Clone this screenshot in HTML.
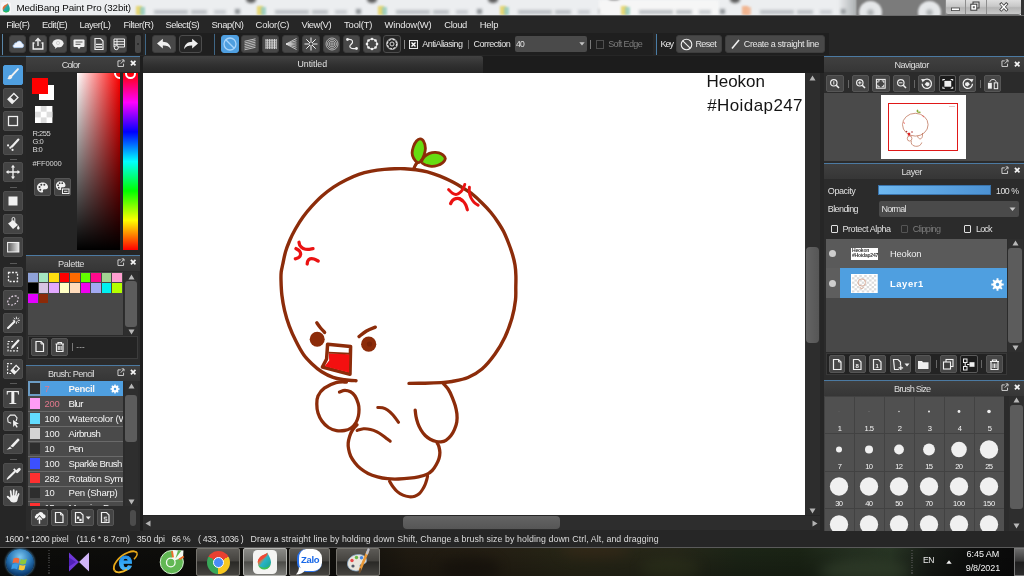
<!DOCTYPE html>
<html>
<head>
<meta charset="utf-8">
<title>MediBang Paint Pro (32bit)</title>
<style>
*{box-sizing:border-box;margin:0;padding:0}
html,body{width:1024px;height:576px;overflow:hidden;background:#262626;font-family:"Liberation Sans",sans-serif;font-size:10px;color:#dcdcdc}
.a{position:absolute}
.x{position:absolute;white-space:nowrap;display:block}
svg{display:block;overflow:visible}
#app{position:absolute;left:0;top:0;width:1024px;height:576px;overflow:hidden;will-change:transform}
</style>
</head>
<body>
<div id="app">
<div class="a" style="left:141px;top:55.5px;width:683px;height:17.5px;background:#1c1c1c"></div><div class="a" style="left:143px;top:56px;width:340px;height:17px;background:linear-gradient(#424242,#303030 55%,#262626);border-radius:2px 2px 0 0"></div><span class="x" style="left:297.5px;top:58.3px;font-size:8.8px;line-height:12px;color:#e4e4e4;letter-spacing:-0.04px;">Untitled</span><div class="a" style="left:143px;top:73px;width:662.2px;height:442px;background:#fff"></div><svg class="a" style="left:143px;top:73px" width="662.5" height="442" viewBox="143 73 662.5 442"><path d="M356 380.7C354.1 380.6 348.4 380.4 344.6 379.8C340.8 379.2 336.9 378.8 333.1 377.4C329.3 376 325.2 373.9 321.7 371.7C318.2 369.5 315.1 366.9 312.1 364C309.1 361.1 306.2 358.3 303.5 354.5C300.8 350.7 298.3 345.9 295.9 341.1C293.5 336.3 291.1 330.9 289.2 325.8C287.3 320.7 285.8 315.7 284.6 310.6C283.4 305.5 282.5 300.4 281.9 295.3C281.3 290.2 281.1 283.9 281 280C280.9 276.1 280.9 274.7 281.2 272C281.5 269.3 282.1 267.4 282.8 264C283.5 260.6 284.4 255.8 285.5 251.9C286.6 248 288.1 244.3 289.7 240.5C291.3 236.7 293.2 232.9 295.4 229C297.6 225.1 300.2 220.8 303 217C305.8 213.2 308.7 209.7 311.9 206.2C315.1 202.7 318.4 199.2 322 196C325.6 192.8 329.5 189.8 333.5 187.1C337.5 184.4 341.8 182.1 346 180C350.2 177.9 354.6 175.9 358.9 174.4C363.1 172.9 367.3 172 371.5 171.2C375.7 170.4 380.5 169.8 384.3 169.4C388.1 169 391.1 168.8 394.5 168.7C397.9 168.6 401 168.5 404.6 168.7C408.2 168.9 412.2 169.2 416 169.7C419.8 170.2 423.4 170.8 427.4 171.9C431.4 173 435.8 174.5 440 176.2C444.2 177.9 449 180.1 452.8 182.1C456.6 184.1 459.6 185.9 463 188C466.4 190.1 469.9 192.2 473.1 194.8C476.4 197.4 479.5 200.6 482.5 203.5C485.5 206.4 488.4 209.5 490.9 212.5C493.4 215.5 495.4 218.3 497.5 221.5C499.6 224.7 501.8 228 503.6 231.6C505.4 235.2 507 239.2 508.5 243C510 246.8 511.4 250.7 512.5 254.4C513.6 258.1 514.4 261.4 515 265C515.6 268.6 515.8 272.3 515.9 276C516 279.7 515.9 283 515.8 287C515.7 291 516.1 294.8 515.5 300C514.9 305.2 513.8 311.8 512 318C510.2 324.2 507.8 331 505 337C502.2 343 498.8 348.7 495 354C491.2 359.3 486.5 365.1 482 369C477.5 372.9 473 375.4 468 377.5C463 379.6 456.5 380.6 452 381.5C447.5 382.4 445.5 382.3 441 382.6C436.5 382.9 430.3 383.1 425 383.2C419.7 383.3 411.7 383.4 409 383.4" fill="none" stroke="#8c2c0a" stroke-width="3.4" stroke-linecap="round" stroke-linejoin="round"/><path d="M414 168.3C414.2 167.8 414.9 166.1 415.5 165C416.1 163.9 417.1 162.5 417.4 162" fill="none" stroke="#8c2c0a" stroke-width="3.2" stroke-linecap="round" stroke-linejoin="round"/><path d="M417.7 162.5C416.5 162.1 414.5 159.8 413.6 158.2C412.7 156.6 412.1 155 412.1 153.1C412.1 151.2 412.7 148.6 413.4 146.6C414.1 144.6 415.4 142.3 416.5 141C417.6 139.7 419 138.8 420.2 138.9C421.4 139 423 140.1 423.8 141.7C424.7 143.2 425.4 145.9 425.4 148.2C425.5 150.4 424.8 152.8 424.1 155C423.4 157.1 422.1 159.6 421 160.8C420 162.1 418.9 162.9 417.7 162.5z" fill="#66dc12" stroke="#8c2c0a" stroke-width="2.8" stroke-linecap="round" stroke-linejoin="round"/><path d="M421.6 162.3C421.4 160.9 423 158.4 424.3 156.9C425.6 155.4 427.6 154.2 429.4 153.4C431.3 152.7 433.5 152.3 435.5 152.4C437.5 152.5 439.9 153 441.5 154C443.2 155 445.1 157 445.2 158.5C445.4 160 443.8 161.8 442.5 162.9C441.1 164.1 439.2 165 437.3 165.5C435.5 166.1 433.2 166.4 431.3 166.3C429.4 166.2 427.3 165.6 425.7 165C424.1 164.3 421.9 163.6 421.6 162.3z" fill="#66dc12" stroke="#8c2c0a" stroke-width="2.8" stroke-linecap="round" stroke-linejoin="round"/><path d="M448.6 189.6C449.2 190.2 451.2 192.4 452.5 193.2C453.8 194 455.2 194.7 456.6 194.4C458 194.1 459.8 192.7 461 191.6C462.2 190.5 463 188.8 463.6 187.6C464.2 186.4 464.6 184.9 464.8 184.4" fill="none" stroke="#ea1212" stroke-width="2.9" stroke-linecap="round" stroke-linejoin="round"/><path d="M469.4 187.2C469.4 188 469.1 190.3 469.3 192C469.5 193.7 470 195.8 470.8 197.5C471.6 199.2 472.8 200.9 474 202.2C475.2 203.5 477.5 204.7 478.2 205.2" fill="none" stroke="#ea1212" stroke-width="2.9" stroke-linecap="round" stroke-linejoin="round"/><path d="M450.6 203.6C450.9 203.1 451.6 201.2 452.5 200.4C453.4 199.6 454.6 198.9 455.8 198.6C457 198.3 458.4 198.3 459.5 198.6C460.6 198.9 461.8 200.3 462.2 200.6" fill="none" stroke="#ea1212" stroke-width="3.3" stroke-linecap="round" stroke-linejoin="round"/><path d="M459 198.6C459.7 199 461.9 199.9 463 201C464.1 202.1 465.1 203.5 465.8 205C466.5 206.5 467.1 209 467.4 209.8" fill="none" stroke="#ea1212" stroke-width="3.1" stroke-linecap="round" stroke-linejoin="round"/><path d="M299 242.2C299.2 242.8 299.3 244.6 300 245.6C300.7 246.6 301.9 247.8 303.2 248.4C304.5 249 306.2 249.4 307.8 249.4C309.4 249.4 312.1 248.7 313 248.6" fill="none" stroke="#ea1212" stroke-width="3.3" stroke-linecap="round" stroke-linejoin="round"/><path d="M296 248.6C296.6 249 298.7 250 299.5 251C300.3 252 300.7 253.4 300.6 254.4C300.5 255.4 299.9 256.5 299 257.2C298.1 257.9 296 258.5 295.4 258.8" fill="none" stroke="#ea1212" stroke-width="3.3" stroke-linecap="round" stroke-linejoin="round"/><path d="M307.2 264C307.3 263.5 307.3 261.9 307.8 261C308.3 260.1 309 259.2 310 258.9C311 258.6 312.6 258.6 314 259C315.4 259.4 317.5 260.7 318.2 261" fill="none" stroke="#ea1212" stroke-width="3.3" stroke-linecap="round" stroke-linejoin="round"/><circle cx="317.2" cy="339.2" r="7.5" fill="#8c2c0a"/><circle cx="368.7" cy="344.2" r="7.6" fill="#8c2c0a"/><circle cx="369.5" cy="344" r="2.6" fill="#7a2408"/><path d="M316.8 322.8C317.4 323.6 318.9 325.9 320.2 327.5C321.5 329.1 323.9 331.6 324.6 332.4" fill="none" stroke="#8c2c0a" stroke-width="3.4" stroke-linecap="round" stroke-linejoin="round"/><path d="M359 336.6C360.2 335.7 363.8 332.6 366.5 331C369.2 329.4 373.8 327.8 375.3 327.2" fill="none" stroke="#8c2c0a" stroke-width="3.4" stroke-linecap="round" stroke-linejoin="round"/><path d="M327.6 344.2L350.6 346.4L350 374.2L322.4 367L326.6 359z" fill="#fff" stroke="#8c2c0a" stroke-width="3.5" stroke-linejoin="round"/><path d="M328.8 353.2L349.4 354.2L349 372.6L324.6 366.2L329.2 360.4z" fill="#f41010"/><path d="M328.6 352.6L349.6 353.6" stroke="#8c2c0a" stroke-width="1.6"/><path d="M346.4 382C344.7 382.1 339.7 381.6 336 382.6C332.3 383.6 327.3 386 324.3 388.2C321.3 390.4 319.2 393.4 318 396C316.8 398.6 316.8 401.2 316.8 404C316.8 406.8 317.1 410.2 318 413C318.9 415.8 320.1 418.6 321.9 421C323.6 423.4 326.1 425.9 328.5 427.5C330.9 429.1 333.8 430.1 336.5 430.6C339.2 431.1 342.1 430.9 344.5 430.5C346.9 430.1 349.1 429.3 351 428C352.9 426.7 354.8 424.5 356 422.5C357.2 420.5 357.9 418.2 358.4 416C358.9 413.8 359 411.6 359 409.5C359 407.4 358.9 405.8 358.2 403.5C357.5 401.2 356.3 397.9 355 396C353.7 394.1 352.2 392.7 350.5 391.8C348.8 390.9 346.8 390.4 345 390.4C343.2 390.4 340.4 391.7 339.5 392" fill="none" stroke="#8c2c0a" stroke-width="3.3" stroke-linecap="round" stroke-linejoin="round"/><path d="M357 424.8C356.2 425.7 353.7 428.1 352.5 430C351.3 431.9 350.3 434.3 349.6 436.5C348.9 438.7 348.4 440.9 348.2 443C348 445.1 348.2 446.8 348.6 449C349 451.2 349.6 453.8 350.6 456C351.6 458.2 353.1 460.3 354.7 462.4C356.3 464.5 358.3 466.7 360.5 468.5C362.7 470.3 365.3 472 368.1 473.4C370.9 474.8 374.3 475.9 377.5 476.8C380.7 477.7 384 478.3 387.5 478.7C391 479.1 394.9 479.1 398.5 479C402.1 478.9 406.1 478.6 409.4 478.2C412.7 477.8 415.6 477.4 418.5 476.8C421.4 476.2 424.2 475.7 426.5 474.6C428.8 473.6 430.6 472.1 432.2 470.5C433.8 468.9 435.1 466.8 436.2 464.8C437.3 462.8 438.4 460.6 439 458.5C439.6 456.4 439.9 454.4 439.9 452.5C439.9 450.6 439.4 448.6 439 447C438.6 445.4 437.5 443.7 437.2 443" fill="none" stroke="#8c2c0a" stroke-width="3.3" stroke-linecap="round" stroke-linejoin="round"/><path d="M357.1 430.4C358.2 430.1 361.3 429 363.5 428.8C365.7 428.6 368.2 428.9 370.5 429.4C372.8 429.9 375 430.8 377 431.8C379 432.8 381 434.2 382.7 435.4C384.4 436.6 385.8 437.8 387 438.8C388.2 439.8 389.7 440.8 390.2 441.2" fill="none" stroke="#8c2c0a" stroke-width="3.1" stroke-linecap="round" stroke-linejoin="round"/><path d="M377.8 407.5C378.6 407.6 380.9 407.4 382.5 407.8C384.1 408.2 385.8 408.9 387.5 410.1C389.2 411.3 391.2 413 393 415C394.8 417 397.6 421.1 398.5 422.3" fill="none" stroke="#8c2c0a" stroke-width="3.1" stroke-linecap="round" stroke-linejoin="round"/><path d="M443.5 383.6C444.3 384.6 447 387.3 448.4 389.5C449.8 391.7 450.9 394.1 452 396.8C453.1 399.5 454.4 402.7 455.2 405.5C456 408.3 456.6 411.1 456.9 413.8C457.2 416.6 457.2 419.4 456.8 422C456.4 424.6 455.4 427.3 454.4 429.6C453.4 431.9 452.2 434 450.8 435.8C449.4 437.6 447.5 439.3 445.9 440.3C444.3 441.3 442.6 441.7 441 441.9C439.4 442.1 438 441.9 436.2 441.5C434.4 441.1 432 440.2 430.2 439.2C428.4 438.2 426.7 437 425.2 435.5C423.7 434 422.2 432 421 430C419.8 428 418.7 425.8 417.9 423.5C417.1 421.2 416.4 418.7 416 416.5C415.6 414.3 415.3 411.2 415.2 410.1" fill="none" stroke="#8c2c0a" stroke-width="3.3" stroke-linecap="round" stroke-linejoin="round"/><path d="M389.5 481.2C390.1 482.1 391.5 484.8 392.8 486.5C394.1 488.2 395.6 490.2 397.3 491.6C399 493.1 401 494.3 403 495.2C405 496.1 407.4 496.6 409.4 496.8C411.4 497 413.2 496.7 414.8 496.2C416.4 495.7 417.9 494.9 419.2 493.8C420.5 492.7 421.5 491.1 422.5 489.5C423.5 487.9 424.5 486 425.2 484.3C425.9 482.6 426.4 480.9 426.8 479.5C427.2 478.1 427.5 476.6 427.6 476" fill="none" stroke="#8c2c0a" stroke-width="3.1" stroke-linecap="round" stroke-linejoin="round"/></svg><span class="x" style="left:706.6px;top:72.5px;font-size:17px;line-height:18px;color:#141414;letter-spacing:-0.07px">Heokon</span><span class="x" style="left:707.2px;top:96.5px;font-size:17px;line-height:18px;color:#141414;letter-spacing:0.41px">#Hoidap247</span><div class="a" style="left:805.2px;top:73px;width:14.8px;height:442px;background:#2d2d2d"></div><div class="a" style="left:820px;top:73px;width:4px;height:458px;background:#262626"></div><svg class="a" style="left:808.8px;top:74.8px;" width="7" height="6" viewBox="0 0 7 6"><path d="M3.5 .5L6.5 5.5H.5z" fill="#b4b4b4"/></svg><div class="a" style="left:806.3px;top:246.6px;width:12.5px;height:96px;background:linear-gradient(90deg,#646464,#565656);border-radius:4px"></div><svg class="a" style="left:808.8px;top:508px;" width="7" height="6" viewBox="0 0 7 6"><path d="M3.5 5.5L6.5 .5H.5z" fill="#b4b4b4"/></svg><div class="a" style="left:141px;top:515px;width:683px;height:16px;background:#262626"></div><div class="a" style="left:143px;top:515.5px;width:677px;height:14.5px;background:#2d2d2d"></div><svg class="a" style="left:144.5px;top:519.5px;" width="6" height="7" viewBox="0 0 6 7"><path d="M.5 3.5L5.5 .5v6z" fill="#b4b4b4"/></svg><div class="a" style="left:402.5px;top:516.3px;width:157px;height:12.8px;background:linear-gradient(#646464,#565656);border-radius:4px"></div><svg class="a" style="left:811.5px;top:519.5px;" width="6" height="7" viewBox="0 0 6 7"><path d="M5.5 3.5L.5 .5v6z" fill="#b4b4b4"/></svg><div class="a" style="left:140px;top:56px;width:3px;height:475px;background:#1e1e1e"></div><div class="a" style="left:0px;top:0px;width:1024px;height:16px;background:#eceef0;overflow:hidden"><div class="a" style="left:136px;top:5.5px;width:6px;height:9px;background:#e6d466;filter:blur(1.3px);opacity:.9"></div><div class="a" style="left:140px;top:6.5px;width:5px;height:8px;background:#8cc8b8;filter:blur(1.3px);opacity:.75"></div><div class="a" style="left:154px;top:9.5px;width:34px;height:4px;background:#bcc0c4;filter:blur(1.4px)"></div><div class="a" style="left:191px;top:9.5px;width:16px;height:4px;background:#bcc0c4;filter:blur(1.4px)"></div><div class="a" style="left:214px;top:10px;width:12px;height:3.5px;background:#c8ccd0;filter:blur(1.4px)"></div><div class="a" style="left:235px;top:9px;width:5px;height:5px;background:#8e9296;filter:blur(1.4px)"></div><div class="a" style="left:245.5px;top:-4px;width:10px;height:6.5px;background:#5a5a5a;border-radius:50%;filter:blur(1.5px)"></div><div class="a" style="left:257.2px;top:5.5px;width:6px;height:9px;background:#e6d466;filter:blur(1.3px);opacity:.9"></div><div class="a" style="left:261.2px;top:6.5px;width:5px;height:8px;background:#8cc8b8;filter:blur(1.3px);opacity:.75"></div><div class="a" style="left:275.2px;top:9.5px;width:34px;height:4px;background:#bcc0c4;filter:blur(1.4px)"></div><div class="a" style="left:312.2px;top:9.5px;width:16px;height:4px;background:#bcc0c4;filter:blur(1.4px)"></div><div class="a" style="left:335.2px;top:10px;width:12px;height:3.5px;background:#c8ccd0;filter:blur(1.4px)"></div><div class="a" style="left:356.2px;top:9px;width:5px;height:5px;background:#8e9296;filter:blur(1.4px)"></div><div class="a" style="left:366.7px;top:-4px;width:10px;height:6.5px;background:#5a5a5a;border-radius:50%;filter:blur(1.5px)"></div><div class="a" style="left:378.4px;top:5.5px;width:6px;height:9px;background:#e6d466;filter:blur(1.3px);opacity:.9"></div><div class="a" style="left:382.4px;top:6.5px;width:5px;height:8px;background:#8cc8b8;filter:blur(1.3px);opacity:.75"></div><div class="a" style="left:396.4px;top:9.5px;width:34px;height:4px;background:#bcc0c4;filter:blur(1.4px)"></div><div class="a" style="left:433.4px;top:9.5px;width:16px;height:4px;background:#bcc0c4;filter:blur(1.4px)"></div><div class="a" style="left:456.4px;top:10px;width:12px;height:3.5px;background:#c8ccd0;filter:blur(1.4px)"></div><div class="a" style="left:477.4px;top:9px;width:5px;height:5px;background:#8e9296;filter:blur(1.4px)"></div><div class="a" style="left:487.9px;top:-4px;width:10px;height:6.5px;background:#5a5a5a;border-radius:50%;filter:blur(1.5px)"></div><div class="a" style="left:499.6px;top:5.5px;width:6px;height:9px;background:#e6d466;filter:blur(1.3px);opacity:.9"></div><div class="a" style="left:503.6px;top:6.5px;width:5px;height:8px;background:#8cc8b8;filter:blur(1.3px);opacity:.75"></div><div class="a" style="left:517.6px;top:9.5px;width:34px;height:4px;background:#bcc0c4;filter:blur(1.4px)"></div><div class="a" style="left:554.6px;top:9.5px;width:16px;height:4px;background:#bcc0c4;filter:blur(1.4px)"></div><div class="a" style="left:577.6px;top:10px;width:12px;height:3.5px;background:#c8ccd0;filter:blur(1.4px)"></div><div class="a" style="left:598.6px;top:9px;width:5px;height:5px;background:#8e9296;filter:blur(1.4px)"></div><div class="a" style="left:609.1px;top:-4px;width:10px;height:6.5px;background:#5a5a5a;border-radius:50%;filter:blur(1.5px)"></div><div class="a" style="left:598.8px;top:0;width:120px;height:16px;background:#f6f6f6;filter:blur(1.5px)"></div><div class="a" style="left:620.8px;top:5.5px;width:6px;height:9px;background:#e6d466;filter:blur(1.3px);opacity:.9"></div><div class="a" style="left:624.8px;top:6.5px;width:5px;height:8px;background:#8cc8b8;filter:blur(1.3px);opacity:.75"></div><div class="a" style="left:638.8px;top:9.5px;width:34px;height:4px;background:#bcc0c4;filter:blur(1.4px)"></div><div class="a" style="left:675.8px;top:9.5px;width:16px;height:4px;background:#bcc0c4;filter:blur(1.4px)"></div><div class="a" style="left:698.8px;top:10px;width:12px;height:3.5px;background:#c8ccd0;filter:blur(1.4px)"></div><div class="a" style="left:719.8px;top:9px;width:5px;height:5px;background:#8e9296;filter:blur(1.4px)"></div><div class="a" style="left:730.3px;top:-4px;width:10px;height:6.5px;background:#5a5a5a;border-radius:50%;filter:blur(1.5px)"></div><div class="a" style="left:742px;top:5.5px;width:6px;height:9px;background:#f2b088;filter:blur(1.3px);opacity:.9"></div><div class="a" style="left:746px;top:6.5px;width:5px;height:8px;background:#f2b088;filter:blur(1.3px);opacity:.75"></div><div class="a" style="left:760px;top:9.5px;width:34px;height:4px;background:#bcc0c4;filter:blur(1.4px)"></div><div class="a" style="left:797px;top:9.5px;width:16px;height:4px;background:#bcc0c4;filter:blur(1.4px)"></div><div class="a" style="left:820px;top:10px;width:12px;height:3.5px;background:#c8ccd0;filter:blur(1.4px)"></div><div class="a" style="left:841px;top:9px;width:5px;height:5px;background:#8e9296;filter:blur(1.4px)"></div><div class="a" style="left:855px;top:-2px;width:92px;height:20px;background:#7b7b7b;filter:blur(1.2px)"></div><div class="a" style="left:859px;top:.5px;width:23px;height:23px;border-radius:50%;background:radial-gradient(circle,#a8acae 0,#b4b8ba 10%,#e4e6e8 30%,#e6e8ea 78%,rgba(230,232,234,0) 100%);filter:blur(.8px)"></div><div class="a" style="left:918px;top:.5px;width:23px;height:23px;border-radius:50%;background:radial-gradient(circle,#a8acae 0,#b4b8ba 10%,#e4e6e8 30%,#e6e8ea 78%,rgba(230,232,234,0) 100%);filter:blur(.8px)"></div><div class="a" style="left:838px;top:-2px;width:18px;height:20px;background:linear-gradient(90deg,rgba(200,204,206,0),#aeb2b4);filter:blur(1px)"></div><div class="a" style="left:945px;top:0;width:76px;height:15px;background:linear-gradient(#dedede,#c8c8c8 45%,#b4b4b4 55%,#c8c8c8);border-left:1px solid #8a8a8a;border-bottom:1px solid #777;border-radius:0 0 3px 3px"></div><div class="a" style="left:965px;top:0;width:1px;height:14px;background:#8e8e8e"></div><div class="a" style="left:986px;top:0;width:1px;height:14px;background:#8e8e8e"></div><div class="a" style="left:1021px;top:0;width:3px;height:16px;background:#333"></div><svg class="a" style="left:945px;top:0px;" width="76" height="16" viewBox="0 0 76 16"><rect x="6.5" y="8" width="8" height="2.6" fill="#fff" stroke="#444" stroke-width=".8"/><rect x="28" y="2" width="6" height="6" fill="#ddd" stroke="#3a3a3a" stroke-width="1"/><rect x="25.8" y="4.2" width="6" height="6" fill="#fff" stroke="#3a3a3a" stroke-width="1"/><rect x="27.8" y="6.2" width="2" height="2" fill="#666"/><path d="M56.3 4.2L61.3 9.6M61.3 4.2L56.3 9.6" stroke="#3a3a3a" stroke-width="3" stroke-linecap="square"/><path d="M56.3 4.2L61.3 9.6M61.3 4.2L56.3 9.6" stroke="#fff" stroke-width="1.5" stroke-linecap="square"/></svg><div class="a" style="left:.8px;top:2.3px;width:10.5px;height:11.4px;border-radius:2.5px;background:#f8f6f8"></div><svg class="a" style="left:0.8px;top:2.3px;" width="10.5" height="11.4" viewBox="0 0 19 21"><defs><linearGradient id="apg" x1="0" y1="0" x2="1" y2="1"><stop offset="0" stop-color="#e83a30"/><stop offset=".32" stop-color="#e87030"/><stop offset=".5" stop-color="#20a8b0"/><stop offset=".8" stop-color="#18a888"/><stop offset="1" stop-color="#30c040"/></linearGradient></defs><path d="M12.5 2.5c.5 2.5 3.5 5.5 3.5 10a6.6 6.6 0 0 1-13.2 0c0-4 3-6.5 5.5-7.5 1.8-.7 3.4-1.5 4.2-2.5z" fill="url(#apg)"/><path d="M3 14.5c2 3.5 9 5 12.5 0-1 4-4 5-6.5 5s-5.2-1.5-6-5z" fill="#30c048"/></svg><span class="x" style="left:16.5px;top:1.3px;font-size:9.8px;line-height:14px;color:#0a0a0a;letter-spacing:-0.12px;">MediBang Paint Pro (32bit)</span></div><div class="a" style="left:0px;top:15px;width:1024px;height:1px;background:#6a6a6a"></div><div class="a" style="left:0px;top:16px;width:1024px;height:17px;background:#262626"></div><span class="x" style="left:6.3px;top:19px;font-size:9.4px;line-height:12px;color:#e8e8e8;letter-spacing:-0.58px;">File(F)</span><span class="x" style="left:42px;top:19px;font-size:9.4px;line-height:12px;color:#e8e8e8;letter-spacing:-0.49px;">Edit(E)</span><span class="x" style="left:79.5px;top:19px;font-size:9.4px;line-height:12px;color:#e8e8e8;letter-spacing:-0.52px;">Layer(L)</span><span class="x" style="left:123.5px;top:19px;font-size:9.4px;line-height:12px;color:#e8e8e8;letter-spacing:-0.45px;">Filter(R)</span><span class="x" style="left:165.5px;top:19px;font-size:9.4px;line-height:12px;color:#e8e8e8;letter-spacing:-0.54px;">Select(S)</span><span class="x" style="left:211.5px;top:19px;font-size:9.4px;line-height:12px;color:#e8e8e8;letter-spacing:-0.42px;">Snap(N)</span><span class="x" style="left:255.6px;top:19px;font-size:9.4px;line-height:12px;color:#e8e8e8;letter-spacing:-0.22px;">Color(C)</span><span class="x" style="left:301.5px;top:19px;font-size:9.4px;line-height:12px;color:#e8e8e8;letter-spacing:-0.44px;">View(V)</span><span class="x" style="left:344px;top:19px;font-size:9.4px;line-height:12px;color:#e8e8e8;letter-spacing:-0.12px;">Tool(T)</span><span class="x" style="left:384.6px;top:19px;font-size:9.4px;line-height:12px;color:#e8e8e8;letter-spacing:-0.17px;">Window(W)</span><span class="x" style="left:444.3px;top:19px;font-size:9.4px;line-height:12px;color:#e8e8e8;letter-spacing:-0.4px;">Cloud</span><span class="x" style="left:479.8px;top:19px;font-size:9.4px;line-height:12px;color:#e8e8e8;letter-spacing:-0.22px;">Help</span><div class="a" style="left:0px;top:33px;width:1024px;height:23px;background:#262626"></div><div class="a" style="left:0px;top:33px;width:143px;height:22px;background:#1f1f1f"></div><div class="a" style="left:146px;top:33px;width:68px;height:22px;background:#1f1f1f"></div><div class="a" style="left:215px;top:33px;width:438px;height:22px;background:#1f1f1f"></div><div class="a" style="left:657px;top:33px;width:172px;height:22px;background:#1f1f1f"></div><div class="a" style="left:2px;top:34px;width:1px;height:21px;background:#5a86a8"></div><div class="a" style="left:145px;top:34px;width:1px;height:21px;background:#3f6685"></div><div class="a" style="left:214px;top:34px;width:1px;height:21px;background:#3f6685"></div><div class="a" style="left:656px;top:34px;width:1px;height:21px;background:#4a7da6"></div><div class="a" style="left:8.9px;top:35px;width:17.5px;height:18px;background:#484848;border:1px solid #3c3c3c;border-radius:3px"></div><svg class="a" style="left:8.9px;top:35px;" width="18" height="18" viewBox="0 0 18 18"><g transform="translate(1.6 2.4) scale(.82)"><path d="M4.5 12.5h9.2a2.6 2.6 0 0 0 .3-5.1 3.6 3.6 0 0 0-6.8-.8 2.2 2.2 0 0 0-2.7 2 2 2 0 0 0 0 3.9z" fill="#eef4ff" stroke="#9cc4f4" stroke-width=".8"/></g></svg><div class="a" style="left:29.1px;top:35px;width:17.5px;height:18px;background:#484848;border:1px solid #3c3c3c;border-radius:3px"></div><svg class="a" style="left:29.1px;top:35px;" width="18" height="18" viewBox="0 0 18 18"><path d="M5.5 8H4.2v6h9.6V8h-1.3" stroke="#f0f0f0" fill="none" stroke-width="1.4"/><path d="M9 11V4M6.5 6.3L9 3.6l2.5 2.7" stroke="#f0f0f0" fill="none" stroke-width="1.4"/></svg><div class="a" style="left:49.3px;top:35px;width:17.5px;height:18px;background:#484848;border:1px solid #3c3c3c;border-radius:3px"></div><svg class="a" style="left:49.3px;top:35px;" width="18" height="18" viewBox="0 0 18 18"><ellipse cx="9" cy="8.3" rx="5.6" ry="4" fill="#f0f0f0"/><path d="M6.5 11l-.6 3 3-2.4z" fill="#f0f0f0"/><circle cx="9" cy="8" r="1.6" fill="none" stroke="#bbb" stroke-width=".6"/></svg><div class="a" style="left:69.5px;top:35px;width:17.5px;height:18px;background:#484848;border:1px solid #3c3c3c;border-radius:3px"></div><svg class="a" style="left:69.5px;top:35px;" width="18" height="18" viewBox="0 0 18 18"><rect x="3.5" y="4.5" width="11" height="7.5" rx="1" fill="#f0f0f0"/><path d="M7.5 12l1.5 2.2 1.5-2.2z" fill="#f0f0f0"/><path d="M5.5 7h7M5.5 9.3h5" stroke="#555" stroke-width="1"/></svg><div class="a" style="left:89.7px;top:35px;width:17.5px;height:18px;background:#484848;border:1px solid #3c3c3c;border-radius:3px"></div><svg class="a" style="left:89.7px;top:35px;" width="18" height="18" viewBox="0 0 18 18"><path d="M5 3.5h5.5l2.5 2.5v8.5H5z" stroke="#f0f0f0" fill="none" stroke-width="1.2"/><path d="M6 9.3h6M6 12h6" stroke="#f0f0f0" stroke-width="1.3"/></svg><div class="a" style="left:109.9px;top:35px;width:17.5px;height:18px;background:#484848;border:1px solid #3c3c3c;border-radius:3px"></div><svg class="a" style="left:109.9px;top:35px;" width="18" height="18" viewBox="0 0 18 18"><path d="M4 4h10.5v8H4zM4 6.7h10.5M4 9.3h10.5M7 4v8" stroke="#f0f0f0" fill="none" stroke-width="1"/><circle cx="6.3" cy="12.7" r="2" fill="#484848" stroke="#f0f0f0" stroke-width="1"/></svg><div class="a" style="left:135px;top:35px;width:5.5px;height:18px;background:#484848;border-radius:2px"></div><div class="a" style="left:136.5px;top:43px;width:2.5px;height:2px;background:#2e2e2e"></div><div class="a" style="left:152px;top:35px;width:23.5px;height:18px;background:#484848;border:1px solid #3c3c3c;border-radius:3px"></div><svg class="a" style="left:152.5px;top:33.5px;" width="22" height="21" viewBox="0 0 18 18"><path d="M3 8.2l5-4.2v2.6c4 .1 6.5 2.2 7 6.4-1.6-2.3-3.6-3.2-7-3.1v2.6z" fill="#f0f0f0"/></svg><div class="a" style="left:178.5px;top:35px;width:23.5px;height:18px;background:#262626;border:1px solid #4c4c4c;border-radius:3px"></div><svg class="a" style="left:179.5px;top:33.5px;" width="22" height="21" viewBox="0 0 18 18"><path d="M15 8.2l-5-4.2v2.6c-4 .100-6.5 2.2-7 6.4 1.6-2.3 3.6-3.2 7-3.1v2.6z" fill="#f0f0f0"/></svg><div class="a" style="left:221px;top:35px;width:17.5px;height:18px;background:#4f9fe0;border:1px solid #4f9fe0;border-radius:3px"></div><svg class="a" style="left:221px;top:35px;" width="18" height="18" viewBox="0 0 18 18"><circle cx="9" cy="9" r="6" fill="none" stroke="#a8d4fa" stroke-width="1.3"/><path d="M4.8 4.8l8.4 8.4" stroke="#a8d4fa" stroke-width="1.3"/></svg><div class="a" style="left:241.3px;top:35px;width:17.5px;height:18px;background:#484848;border:1px solid #3c3c3c;border-radius:3px"></div><svg class="a" style="left:241.3px;top:35px;" width="18" height="18" viewBox="0 0 18 18"><path d="M3.5 6.3l11-2.5" stroke="#d8d8d8" stroke-width=".8"/><path d="M3.5 8l11-2.5" stroke="#d8d8d8" stroke-width=".8"/><path d="M3.5 9.7l11-2.5" stroke="#d8d8d8" stroke-width=".8"/><path d="M3.5 11.4l11-2.5" stroke="#d8d8d8" stroke-width=".8"/><path d="M3.5 13.1l11-2.5" stroke="#d8d8d8" stroke-width=".8"/><path d="M3.5 14.8l11-2.5" stroke="#d8d8d8" stroke-width=".8"/></svg><div class="a" style="left:261.6px;top:35px;width:17.5px;height:18px;background:#484848;border:1px solid #3c3c3c;border-radius:3px"></div><svg class="a" style="left:261.6px;top:35px;" width="18" height="18" viewBox="0 0 18 18"><path d="M4 4v10" stroke="#e8e8e8" stroke-width=".9"/><path d="M5.7 4v10" stroke="#e8e8e8" stroke-width=".9"/><path d="M7.4 4v10" stroke="#e8e8e8" stroke-width=".9"/><path d="M9.1 4v10" stroke="#e8e8e8" stroke-width=".9"/><path d="M10.8 4v10" stroke="#e8e8e8" stroke-width=".9"/><path d="M12.5 4v10" stroke="#e8e8e8" stroke-width=".9"/><path d="M14.2 4v10" stroke="#e8e8e8" stroke-width=".9"/><path d="M3.5 5.5h11" stroke="#d0d0d0" stroke-width=".5"/><path d="M3.5 7.8h11" stroke="#d0d0d0" stroke-width=".5"/><path d="M3.5 10.1h11" stroke="#d0d0d0" stroke-width=".5"/><path d="M3.5 12.4h11" stroke="#d0d0d0" stroke-width=".5"/></svg><div class="a" style="left:281.9px;top:35px;width:17.5px;height:18px;background:#484848;border:1px solid #3c3c3c;border-radius:3px"></div><svg class="a" style="left:281.9px;top:35px;" width="18" height="18" viewBox="0 0 18 18"><path d="M4 9L14.5 3.5" stroke="#e0e0e0" stroke-width=".8"/><path d="M4 9L14.5 5.7" stroke="#e0e0e0" stroke-width=".8"/><path d="M4 9L14.5 7.9" stroke="#e0e0e0" stroke-width=".8"/><path d="M4 9L14.5 10.1" stroke="#e0e0e0" stroke-width=".8"/><path d="M4 9L14.5 12.3" stroke="#e0e0e0" stroke-width=".8"/><path d="M4 9L14.5 14.5" stroke="#e0e0e0" stroke-width=".8"/></svg><div class="a" style="left:302.2px;top:35px;width:17.5px;height:18px;background:#484848;border:1px solid #3c3c3c;border-radius:3px"></div><svg class="a" style="left:302.2px;top:35px;" width="18" height="18" viewBox="0 0 18 18"><path d="M9 2.5v13M2.5 9h13M4.3 4.3l9.4 9.4M13.7 4.3l-9.4 9.4" stroke="#f0f0f0" stroke-width="1"/><circle cx="9" cy="9" r="1.3" fill="#484848"/></svg><div class="a" style="left:322.5px;top:35px;width:17.5px;height:18px;background:#484848;border:1px solid #3c3c3c;border-radius:3px"></div><svg class="a" style="left:322.5px;top:35px;" width="18" height="18" viewBox="0 0 18 18"><circle cx="9" cy="9" r="1.2" fill="none" stroke="#d8d8d8" stroke-width=".7"/><circle cx="9" cy="9" r="2.8" fill="none" stroke="#d8d8d8" stroke-width=".7"/><circle cx="9" cy="9" r="4.4" fill="none" stroke="#d8d8d8" stroke-width=".7"/><circle cx="9" cy="9" r="6" fill="none" stroke="#d8d8d8" stroke-width=".7"/></svg><div class="a" style="left:342.8px;top:35px;width:17.5px;height:18px;background:#484848;border:1px solid #3c3c3c;border-radius:3px"></div><svg class="a" style="left:342.8px;top:35px;" width="18" height="18" viewBox="0 0 18 18"><path d="M4.5 4.5c6-1 6 3 3.5 5s-1 5 5.5 4" fill="none" stroke="#f0f0f0" stroke-width="1.2"/><circle cx="4.5" cy="4.5" r="1.4" fill="#f0f0f0"/><circle cx="13.5" cy="13.5" r="1.4" fill="#f0f0f0"/></svg><div class="a" style="left:363.1px;top:35px;width:17.5px;height:18px;background:#484848;border:1px solid #3c3c3c;border-radius:3px"></div><svg class="a" style="left:363.1px;top:35px;" width="18" height="18" viewBox="0 0 18 18"><circle cx="9" cy="9" r="5" fill="none" stroke="#f0f0f0" stroke-width="1"/><circle cx="14" cy="9" r="1.3" fill="#f0f0f0"/><circle cx="12.5" cy="12.5" r="1.3" fill="#f0f0f0"/><circle cx="9" cy="14" r="1.3" fill="#f0f0f0"/><circle cx="5.5" cy="12.5" r="1.3" fill="#f0f0f0"/><circle cx="4" cy="9" r="1.3" fill="#f0f0f0"/><circle cx="5.5" cy="5.5" r="1.3" fill="#f0f0f0"/><circle cx="9" cy="4" r="1.3" fill="#f0f0f0"/><circle cx="12.5" cy="5.5" r="1.3" fill="#f0f0f0"/></svg><div class="a" style="left:383.4px;top:35px;width:17.5px;height:18px;background:#262626;border:1px solid #4c4c4c;border-radius:3px"></div><svg class="a" style="left:383.4px;top:35px;" width="18" height="18" viewBox="0 0 18 18"><circle cx="9" cy="9" r="4.6" fill="none" stroke="#e8e8e8" stroke-width="1.1" stroke-dasharray="2.4 1.2"/><circle cx="9" cy="9" r="5.4" fill="none" stroke="#e8e8e8" stroke-width=".8"/><circle cx="9" cy="9" r="2" fill="none" stroke="#e8e8e8" stroke-width=".9"/></svg><div class="a" style="left:404px;top:40px;width:1px;height:9px;background:#8a8a8a"></div><div class="a" style="left:409px;top:40px;width:9px;height:9px;border:1px solid #e8e8e8;background:#2a2a2a"></div><svg class="a" style="left:409px;top:40px;" width="9" height="9" viewBox="0 0 9 9"><path d="M2.5 2.5l4 4M6.5 2.5l-4 4" stroke="#fff" stroke-width="1.4"/></svg><span class="x" style="left:422.3px;top:38px;font-size:9px;line-height:12px;color:#e6e6e6;letter-spacing:-0.58px;">AntiAliasing</span><div class="a" style="left:468px;top:40px;width:1px;height:9px;background:#6a6a6a"></div><span class="x" style="left:473.6px;top:38px;font-size:9px;line-height:12px;color:#e6e6e6;letter-spacing:-0.49px;">Correction</span><div class="a" style="left:514.5px;top:35.5px;width:72.5px;height:16.5px;background:#4a4a4a;border-radius:2px"></div><span class="x" style="left:516px;top:38px;font-size:8.6px;line-height:12px;color:#e0e0e0;letter-spacing:-0.71px;">40</span><svg class="a" style="left:578.5px;top:42.3px;" width="6" height="4" viewBox="0 0 6 4"><path d="M.3.3h5.4l-2.7 3.2z" fill="#c4c4c4"/></svg><div class="a" style="left:590px;top:40px;width:1px;height:9px;background:#7a7a7a"></div><div class="a" style="left:595.5px;top:40px;width:8.5px;height:8.5px;border:1px solid #4e4e4e"></div><span class="x" style="left:608.2px;top:38px;font-size:9px;line-height:12px;color:#7c7c7c;letter-spacing:-0.62px;">Soft Edge</span><span class="x" style="left:660.6px;top:38px;font-size:9px;line-height:12px;color:#e6e6e6;letter-spacing:-1.05px;">Key</span><div class="a" style="left:676px;top:35px;width:45.5px;height:17.5px;background:#484848;border-radius:3px;border:1px solid #3e3e3e"></div><svg class="a" style="left:680px;top:37.5px;" width="13" height="13" viewBox="0 0 13 13"><circle cx="6.5" cy="6.5" r="5.3" fill="none" stroke="#f0f0f0" stroke-width="1.1"/><path d="M2.8 2.8l7.4 7.4" stroke="#f0f0f0" stroke-width="1.1"/></svg><span class="x" style="left:695.4px;top:38px;font-size:9px;line-height:12px;color:#e6e6e6;letter-spacing:-0.56px;">Reset</span><div class="a" style="left:725.4px;top:35px;width:100px;height:17.5px;background:#484848;border-radius:3px;border:1px solid #3e3e3e"></div><svg class="a" style="left:730px;top:38px;" width="11" height="12" viewBox="0 0 11 12"><path d="M2 10.5L9 2" stroke="#f0f0f0" stroke-width="1.6"/></svg><span class="x" style="left:743.8px;top:38px;font-size:9px;line-height:12px;color:#e6e6e6;letter-spacing:-0.36px;">Create a straight line</span><div class="a" style="left:0px;top:56px;width:26px;height:474px;background:#262626"></div><div class="a" style="left:0px;top:56px;width:26px;height:1px;background:#35536b"></div><div class="a" style="left:3px;top:64.5px;width:20px;height:20px;background:#4f9fe0;border:1px solid #4f9fe0;border-radius:2px"></div><svg class="a" style="left:3px;top:64.5px;" width="20" height="20" viewBox="0 0 20 20"><g transform="translate(1 1) scale(.9)"><path d="M15.5 3.5L8.5 11" stroke="#f0f0f0" stroke-width="2.2" stroke-linecap="round"/><path d="M8.3 10.3c-2-.8-3.3.6-3.5 2.3-.1.9-.6 1.4-1.3 1.7 2.2.9 5.2.3 5.8-2.2z" fill="#f0f0f0"/></g></svg><div class="a" style="left:3px;top:88px;width:20px;height:20px;background:#444444;border:1px solid #4e4e4e;border-radius:2px"></div><svg class="a" style="left:3px;top:88px;" width="20" height="20" viewBox="0 0 20 20"><g transform="translate(1 1) scale(.9)"><path d="M4.5 11.5l6.5-6.5 4.5 4.5-6.5 6.5z" fill="none" stroke="#f0f0f0" stroke-width="1.5"/><path d="M4.5 11.5l2.6-2.6 4.5 4.5-2.6 2.6z" fill="#f0f0f0"/></g></svg><div class="a" style="left:3px;top:111px;width:20px;height:20px;background:#444444;border:1px solid #4e4e4e;border-radius:2px"></div><svg class="a" style="left:3px;top:111px;" width="20" height="20" viewBox="0 0 20 20"><g transform="translate(1 1) scale(.9)"><rect x="5" y="5" width="10" height="10" fill="none" stroke="#f0f0f0" stroke-width="1.4"/></g></svg><div class="a" style="left:3px;top:134.5px;width:20px;height:20px;background:#444444;border:1px solid #4e4e4e;border-radius:2px"></div><svg class="a" style="left:3px;top:134.5px;" width="20" height="20" viewBox="0 0 20 20"><g transform="translate(1 1) scale(.9)"><path d="M16 4l-6.5 7" stroke="#f0f0f0" stroke-width="2.4" stroke-linecap="round"/><circle cx="4.5" cy="10.5" r="1.2" fill="#f0f0f0"/><circle cx="7" cy="13" r="1.2" fill="#f0f0f0"/><circle cx="9.5" cy="15.5" r="1.2" fill="#f0f0f0"/><circle cx="8.7" cy="11.8" r="1.3" fill="#f0f0f0"/></g></svg><div class="a" style="left:3px;top:162px;width:20px;height:20px;background:#444444;border:1px solid #4e4e4e;border-radius:2px"></div><svg class="a" style="left:3px;top:162px;" width="20" height="20" viewBox="0 0 20 20"><g transform="translate(1 1) scale(.9)"><path d="M10 3.5v13M3.5 10h13" stroke="#f0f0f0" stroke-width="1.5"/><path d="M10 2l2.3 3h-4.6zM10 18l2.3-3h-4.6zM2 10l3-2.3v4.6zM18 10l-3-2.3v4.6z" fill="#f0f0f0"/></g></svg><div class="a" style="left:3px;top:190.5px;width:20px;height:20px;background:#444444;border:1px solid #4e4e4e;border-radius:2px"></div><svg class="a" style="left:3px;top:190.5px;" width="20" height="20" viewBox="0 0 20 20"><g transform="translate(1 1) scale(.9)"><rect x="5" y="5" width="10" height="10" fill="#f0f0f0"/></g></svg><div class="a" style="left:3px;top:214px;width:20px;height:20px;background:#444444;border:1px solid #4e4e4e;border-radius:2px"></div><svg class="a" style="left:3px;top:214px;" width="20" height="20" viewBox="0 0 20 20"><g transform="translate(1 1) scale(.9)"><path d="M4.5 9.5l5.5-4 5.5 5.5-5.5 4.5z" fill="#f0f0f0"/><path d="M9 7V4.2a1.5 1.5 0 0 1 3 0V8" fill="none" stroke="#f0f0f0" stroke-width="1.1"/><path d="M15.8 11.5c1 1.6 1.5 2.4 1.5 3.1a1.4 1.4 0 0 1-2.8 0c0-.7.5-1.5 1.3-3.1z" fill="#f0f0f0"/></g></svg><div class="a" style="left:3px;top:237px;width:20px;height:20px;background:#444444;border:1px solid #4e4e4e;border-radius:2px"></div><svg class="a" style="left:3px;top:237px;" width="20" height="20" viewBox="0 0 20 20"><g transform="translate(1 1) scale(.9)"><defs><linearGradient id="gg" x1="0" x2="1"><stop offset="0" stop-color="#555"/><stop offset="1" stop-color="#e8e8e8"/></linearGradient></defs><rect x="4" y="5" width="12.5" height="10.5" fill="url(#gg)" stroke="#f0f0f0" stroke-width="1.2"/></g></svg><div class="a" style="left:3px;top:266.5px;width:20px;height:20px;background:#444444;border:1px solid #4e4e4e;border-radius:2px"></div><svg class="a" style="left:3px;top:266.5px;" width="20" height="20" viewBox="0 0 20 20"><g transform="translate(1 1) scale(.9)"><rect x="5" y="5" width="10" height="10" fill="none" stroke="#f0f0f0" stroke-width="1.4" stroke-dasharray="2.2 1.6"/></g></svg><div class="a" style="left:3px;top:289.5px;width:20px;height:20px;background:#444444;border:1px solid #4e4e4e;border-radius:2px"></div><svg class="a" style="left:3px;top:289.5px;" width="20" height="20" viewBox="0 0 20 20"><g transform="translate(1 1) scale(.9)"><ellipse cx="10" cy="10.5" rx="6.5" ry="4.3" transform="rotate(-35 10 10.5)" fill="none" stroke="#e8d8e8" stroke-width="1.3" stroke-dasharray="2 1.7"/></g></svg><div class="a" style="left:3px;top:313px;width:20px;height:20px;background:#444444;border:1px solid #4e4e4e;border-radius:2px"></div><svg class="a" style="left:3px;top:313px;" width="20" height="20" viewBox="0 0 20 20"><g transform="translate(1 1) scale(.9)"><path d="M4.5 15.5l7-7" stroke="#f0f0f0" stroke-width="2.3" stroke-linecap="round"/><path d="M13.8 3v2.6M13.8 8.4V11M9.8 7h2.6M15.2 7h2.6M11 4.2l1.6 1.6M16.6 4.2L15 5.8M15 8.2l1.6 1.6" stroke="#f0f0f0" stroke-width="1"/></g></svg><div class="a" style="left:3px;top:336px;width:20px;height:20px;background:#444444;border:1px solid #4e4e4e;border-radius:2px"></div><svg class="a" style="left:3px;top:336px;" width="20" height="20" viewBox="0 0 20 20"><g transform="translate(1 1) scale(.9)"><path d="M10 5H4.5v10.5H15V10" fill="none" stroke="#f0f0f0" stroke-width="1.3" stroke-dasharray="2 1.6"/><path d="M16 4l-6.5 7" stroke="#f0f0f0" stroke-width="2.4" stroke-linecap="round"/><path d="M9 10.5l-1.5 3 3-1.5z" fill="#f0f0f0"/></g></svg><div class="a" style="left:3px;top:359px;width:20px;height:20px;background:#444444;border:1px solid #4e4e4e;border-radius:2px"></div><svg class="a" style="left:3px;top:359px;" width="20" height="20" viewBox="0 0 20 20"><g transform="translate(1 1) scale(.9)"><path d="M9 4H4v11h5" fill="none" stroke="#f0f0f0" stroke-width="1.3" stroke-dasharray="2 1.6"/><path d="M8 12l5.5-6 3.5 3.5-5.5 6z" fill="none" stroke="#f0f0f0" stroke-width="1.4"/><path d="M8 12l2.2-2.4 3.5 3.5-2.2 2.4z" fill="#f0f0f0"/></g></svg><div class="a" style="left:3px;top:387.5px;width:20px;height:20px;background:#444444;border:1px solid #4e4e4e;border-radius:2px"></div><span class="x" style="left:6.5px;top:388px;font-family:'Liberation Serif',serif;font-weight:bold;font-size:19px;line-height:20px;color:#f0f0f0">T</span><div class="a" style="left:3px;top:411px;width:20px;height:20px;background:#444444;border:1px solid #4e4e4e;border-radius:2px"></div><svg class="a" style="left:3px;top:411px;" width="20" height="20" viewBox="0 0 20 20"><g transform="translate(1 1) scale(.9)"><path d="M4 6.5l3-3h5l2.5 3-1 3.5" fill="none" stroke="#f0f0f0" stroke-width="1.2"/><path d="M4 6.5l.5 4.5 3.5 1.5" fill="none" stroke="#f0f0f0" stroke-width="1.2"/><path d="M10 9l6.5 4-3 .6 1.8 3-1.3.8-1.8-3-2 2.2z" fill="#f0f0f0"/></g></svg><div class="a" style="left:3px;top:434px;width:20px;height:20px;background:#444444;border:1px solid #4e4e4e;border-radius:2px"></div><svg class="a" style="left:3px;top:434px;" width="20" height="20" viewBox="0 0 20 20"><g transform="translate(1 1) scale(.9)"><path d="M15.5 3.5l2 2-7.5 8-3-1z" fill="#f0f0f0"/><path d="M6.5 13l-3.5 3.5 6-1.5z" fill="#f0f0f0"/></g></svg><div class="a" style="left:3px;top:463px;width:20px;height:20px;background:#444444;border:1px solid #4e4e4e;border-radius:2px"></div><svg class="a" style="left:3px;top:463px;" width="20" height="20" viewBox="0 0 20 20"><g transform="translate(1 1) scale(.9)"><path d="M12.3 7.3L5.3 14.3L3.6 16.8L6.1 15.1L13.1 8.1" fill="none" stroke="#f0f0f0" stroke-width="1.3" stroke-linejoin="round"/><path d="M10.8 5.4l4.2 4.2" stroke="#f0f0f0" stroke-width="1.8"/><path d="M12.6 7.8l3.2-3.2a1.7 1.7 0 0 1 2.4 2.4l-3.2 3.2z" fill="#f0f0f0"/></g></svg><div class="a" style="left:3px;top:486px;width:20px;height:20px;background:#444444;border:1px solid #4e4e4e;border-radius:2px"></div><svg class="a" style="left:3px;top:486px;" width="20" height="20" viewBox="0 0 20 20"><g transform="translate(1 1) scale(.9)"><ellipse cx="10.9" cy="13.2" rx="4.3" ry="3.9" fill="#f0f0f0"/><path d="M8.3 11.5L7.4 4.6M10.6 10.5l.2-7M12.9 11l1-6.2M14.4 12.5l1.9-4.8" stroke="#f0f0f0" stroke-width="1.9" stroke-linecap="round"/><path d="M8 14.5L4.2 10.8" stroke="#f0f0f0" stroke-width="2.2" stroke-linecap="round"/></g></svg><div class="a" style="left:9.5px;top:158.5px;width:7px;height:1px;background:#5a5a5a"></div><div class="a" style="left:9.5px;top:186.5px;width:7px;height:1px;background:#5a5a5a"></div><div class="a" style="left:9.5px;top:262.5px;width:7px;height:1px;background:#5a5a5a"></div><div class="a" style="left:9.5px;top:383px;width:7px;height:1px;background:#5a5a5a"></div><div class="a" style="left:9.5px;top:458.5px;width:7px;height:1px;background:#5a5a5a"></div><div class="a" style="left:26px;top:56px;width:114px;height:199px;background:#252525"></div><div class="a" style="left:26px;top:56px;width:114px;height:1px;background:#4c7aa2"></div><div class="a" style="left:26px;top:57px;width:114px;height:15px;background:linear-gradient(#404040,#363636)"></div><span class="x" style="left:61.8px;top:59px;font-size:9.2px;line-height:12px;color:#dedede;letter-spacing:-0.88px;">Color</span><svg class="a" style="left:117.1px;top:59px;" width="7.5" height="8.4" viewBox="0 0 8 9"><path d="M4 2H1v6h6V5" fill="none" stroke="#d8d8d8" stroke-width="1"/><path d="M4 5l3.3-3.6M5 1h2.5v2.5" fill="none" stroke="#d8d8d8" stroke-width="1"/></svg><svg class="a" style="left:129.5px;top:60.2px;" width="6.4" height="6.4" viewBox="0 0 7 7"><path d="M1 1l5 5M6 1l-5 5" stroke="#f4f4f4" stroke-width="1.9"/></svg><div class="a" style="left:39.3px;top:85.2px;width:15.2px;height:15px;background:#fff"></div><div class="a" style="left:32px;top:78px;width:16.3px;height:16px;background:#f00"></div><div class="a" style="left:34.8px;top:106px;width:17.4px;height:17px;background:#fff"></div><svg class="a" style="left:34.8px;top:106px;" width="17.4" height="17" viewBox="0 0 17.4 17"><rect width="17.4" height="17" fill="#fff"/><rect x="5.8" y="0" width="5.8" height="5.7" fill="#ddd"/><rect x="0" y="5.7" width="5.8" height="5.7" fill="#ddd"/><rect x="11.6" y="5.7" width="5.8" height="5.7" fill="#ddd"/><rect x="5.8" y="11.4" width="5.8" height="5.6" fill="#ddd"/></svg><span class="x" style="left:32.5px;top:128.9px;font-size:7.6px;line-height:10px;color:#d8d8d8;letter-spacing:-0.5px;">R:255</span><span class="x" style="left:32.5px;top:137.3px;font-size:7.6px;line-height:10px;color:#d8d8d8;letter-spacing:-0.5px;">G:0</span><span class="x" style="left:32.5px;top:145.3px;font-size:7.6px;line-height:10px;color:#d8d8d8;letter-spacing:-0.56px;">B:0</span><span class="x" style="left:32.5px;top:158.8px;font-size:7.6px;line-height:10px;color:#d8d8d8;letter-spacing:-0.19px;">#FF0000</span><div class="a" style="left:34px;top:178px;width:17.3px;height:18px;background:#444;border:1px solid #565656;border-radius:2px"></div><div class="a" style="left:54.2px;top:178px;width:17.3px;height:18px;background:#444;border:1px solid #565656;border-radius:2px"></div><svg class="a" style="left:34px;top:178.5px;" width="17" height="17" viewBox="0 0 17 17"><path d="M8.5 3.5c-3.3 0-5.5 2.3-5.5 5s2.2 5 4.8 5c1.2 0 1.5-.7 1.2-1.5-.4-1 .2-1.8 1.3-1.8h1.5c1.3 0 2.2-.9 2.2-2.2 0-2.6-2.4-4.5-5.5-4.5z" fill="#f0f0f0"/><circle cx="5.5" cy="8" r="1" fill="#3e3e3e"/><circle cx="7.3" cy="5.7" r="1" fill="#3e3e3e"/><circle cx="10.3" cy="5.7" r="1" fill="#3e3e3e"/><circle cx="6.3" cy="10.8" r="1" fill="#3e3e3e"/></svg><svg class="a" style="left:54.2px;top:178.5px;" width="17" height="17" viewBox="0 0 17 17"><g transform="translate(-.8 -.8) scale(.88)"><path d="M8.5 3.5c-3.3 0-5.5 2.3-5.5 5s2.2 5 4.8 5c1.2 0 1.5-.7 1.2-1.5-.4-1 .2-1.8 1.3-1.8h1.5c1.3 0 2.2-.9 2.2-2.2 0-2.6-2.4-4.5-5.5-4.5z" fill="#f0f0f0"/><circle cx="5.5" cy="8" r="1" fill="#3e3e3e"/><circle cx="7.3" cy="5.7" r="1" fill="#3e3e3e"/><circle cx="10.3" cy="5.7" r="1" fill="#3e3e3e"/><circle cx="6.3" cy="10.8" r="1" fill="#3e3e3e"/></g><rect x="8.5" y="10" width="6.5" height="4.5" fill="#3e3e3e" stroke="#f0f0f0" stroke-width="1"/><path d="M10 12.3h3.5" stroke="#f0f0f0" stroke-width="1"/></svg><div class="a" style="left:77px;top:73.4px;width:43px;height:176.4px;background:linear-gradient(to bottom,rgba(0,0,0,0),#000),linear-gradient(to right,#fff,#f00)"></div><div class="a" style="left:123px;top:73.4px;width:15px;height:176.4px;background:linear-gradient(to bottom,#f00 0%,#f0f 16.6%,#00f 33.3%,#0ff 50%,#0f0 66.6%,#ff0 83.3%,#f00 100%)"></div><div class="a" style="left:77px;top:73px;width:43px;height:14px;overflow:hidden"><div class="a" style="left:37.2px;top:-5.8px;width:11.6px;height:11.6px;border:2.3px solid #fff;border-radius:50%"></div></div><div class="a" style="left:123px;top:73px;width:15px;height:14px;overflow:hidden"><div class="a" style="left:1.7px;top:-5.6px;width:11.6px;height:11.6px;border:2.3px solid #fff;border-radius:50%"></div></div><div class="a" style="left:26px;top:255px;width:114px;height:109px;background:#2b2b2b"></div><div class="a" style="left:26px;top:255px;width:114px;height:1px;background:#4c7aa2"></div><div class="a" style="left:26px;top:256px;width:114px;height:15px;background:linear-gradient(#404040,#363636)"></div><span class="x" style="left:58px;top:258px;font-size:9.2px;line-height:12px;color:#dedede;letter-spacing:-0.36px;">Palette</span><svg class="a" style="left:117.1px;top:258px;" width="7.5" height="8.4" viewBox="0 0 8 9"><path d="M4 2H1v6h6V5" fill="none" stroke="#d8d8d8" stroke-width="1"/><path d="M4 5l3.3-3.6M5 1h2.5v2.5" fill="none" stroke="#d8d8d8" stroke-width="1"/></svg><svg class="a" style="left:129.5px;top:259.2px;" width="6.4" height="6.4" viewBox="0 0 7 7"><path d="M1 1l5 5M6 1l-5 5" stroke="#f4f4f4" stroke-width="1.9"/></svg><div class="a" style="left:27.6px;top:271.5px;width:95px;height:63.5px;background:#484848"></div><div class="a" style="left:28.4px;top:272.8px;width:9.5px;height:9.5px;background:#8fa2d8"></div><div class="a" style="left:38.879999999999995px;top:272.8px;width:9.5px;height:9.5px;background:#a4e6c0"></div><div class="a" style="left:49.36px;top:272.8px;width:9.5px;height:9.5px;background:#ffdf10"></div><div class="a" style="left:59.84px;top:272.8px;width:9.5px;height:9.5px;background:#ff0000"></div><div class="a" style="left:70.32px;top:272.8px;width:9.5px;height:9.5px;background:#ff6a00"></div><div class="a" style="left:80.80000000000001px;top:272.8px;width:9.5px;height:9.5px;background:#62ff00"></div><div class="a" style="left:91.28px;top:272.8px;width:9.5px;height:9.5px;background:#ff0a8c"></div><div class="a" style="left:101.75999999999999px;top:272.8px;width:9.5px;height:9.5px;background:#a2d292"></div><div class="a" style="left:112.24000000000001px;top:272.8px;width:9.5px;height:9.5px;background:#ff9fd0"></div><div class="a" style="left:28.4px;top:283.2px;width:9.5px;height:9.5px;background:#000000"></div><div class="a" style="left:38.879999999999995px;top:283.2px;width:9.5px;height:9.5px;background:#d8c4e2"></div><div class="a" style="left:49.36px;top:283.2px;width:9.5px;height:9.5px;background:#e2a8ff"></div><div class="a" style="left:59.84px;top:283.2px;width:9.5px;height:9.5px;background:#ffffc4"></div><div class="a" style="left:70.32px;top:283.2px;width:9.5px;height:9.5px;background:#ffdcbc"></div><div class="a" style="left:80.80000000000001px;top:283.2px;width:9.5px;height:9.5px;background:#f000f0"></div><div class="a" style="left:91.28px;top:283.2px;width:9.5px;height:9.5px;background:#a2aaf2"></div><div class="a" style="left:101.75999999999999px;top:283.2px;width:9.5px;height:9.5px;background:#00f0f0"></div><div class="a" style="left:112.24000000000001px;top:283.2px;width:9.5px;height:9.5px;background:#b4ff00"></div><div class="a" style="left:28.4px;top:293.6px;width:9.5px;height:9.5px;background:#e400ff"></div><div class="a" style="left:38.879999999999995px;top:293.6px;width:9.5px;height:9.5px;background:#8c2a08"></div><div class="a" style="left:124px;top:271.5px;width:14px;height:63.5px;background:#2e2e2e"></div><svg class="a" style="left:127.5px;top:273.5px;" width="7" height="6" viewBox="0 0 7 6"><path d="M3.5 .5L6.5 5.5H.5z" fill="#b8b8b8"/></svg><div class="a" style="left:124.8px;top:281px;width:12px;height:45.5px;background:#5c5c5c;border-radius:3px"></div><svg class="a" style="left:127.5px;top:328.5px;" width="7" height="6" viewBox="0 0 7 6"><path d="M3.5 5.5L6.5 .5H.5z" fill="#b8b8b8"/></svg><div class="a" style="left:27.6px;top:336px;width:110.4px;height:22.5px;background:#232323;border:1px solid #3c3c3c"></div><div class="a" style="left:30.8px;top:338px;width:17.3px;height:17.5px;background:#444;border:1px solid #565656;border-radius:2px"></div><div class="a" style="left:50.8px;top:338px;width:17.3px;height:17.5px;background:#444;border:1px solid #565656;border-radius:2px"></div><svg class="a" style="left:30.8px;top:338px;" width="17" height="17" viewBox="0 0 17 17"><path d="M5 3.5h5l2.5 2.5v7.5H5z" fill="none" stroke="#f0f0f0" stroke-width="1.2"/><path d="M10 3.5V6h2.5" fill="none" stroke="#f0f0f0" stroke-width=".9"/></svg><svg class="a" style="left:50.8px;top:338px;" width="17" height="17" viewBox="0 0 17 17"><path d="M4.5 6h8.5M7 6V4.5h3.5V6M5.5 6.5v7h6.5v-7" fill="none" stroke="#f0f0f0" stroke-width="1.2"/><path d="M7.3 8v4M8.75 8v4M10.2 8v4" stroke="#f0f0f0" stroke-width=".9"/></svg><div class="a" style="left:72.4px;top:343px;width:1px;height:8px;background:#777"></div><span class="x" style="left:76.3px;top:341px;font-size:8px;line-height:12px;color:#cfcfcf;letter-spacing:0.2px;">---</span><div class="a" style="left:26px;top:364px;width:114px;height:166.5px;background:#2b2b2b"></div><div class="a" style="left:26px;top:365px;width:114px;height:1px;background:#4c7aa2"></div><div class="a" style="left:26px;top:366px;width:114px;height:15px;background:linear-gradient(#404040,#363636)"></div><span class="x" style="left:48px;top:368px;font-size:9.2px;line-height:12px;color:#dedede;letter-spacing:-0.63px;">Brush: Pencil</span><svg class="a" style="left:117.1px;top:368px;" width="7.5" height="8.4" viewBox="0 0 8 9"><path d="M4 2H1v6h6V5" fill="none" stroke="#d8d8d8" stroke-width="1"/><path d="M4 5l3.3-3.6M5 1h2.5v2.5" fill="none" stroke="#d8d8d8" stroke-width="1"/></svg><svg class="a" style="left:129.5px;top:369.2px;" width="6.4" height="6.4" viewBox="0 0 7 7"><path d="M1 1l5 5M6 1l-5 5" stroke="#f4f4f4" stroke-width="1.9"/></svg><div class="a" style="left:27.8px;top:381.3px;width:95.5px;height:125px;overflow:hidden;background:#4a4a4a"><div class="a" style="left:0px;top:0px;width:95.5px;height:14.7px;background:#4f9fe0"></div><div class="a" style="left:0px;top:0px;width:13.6px;height:14.7px;background:#6c9cc4"></div><div class="a" style="left:2.4px;top:2.2px;width:10.3px;height:10.3px;background:#2e2e2e"></div><span class="x" style="left:16.7px;top:1.6px;font-size:9.4px;line-height:12px;color:#e0788c;letter-spacing:0px;">7</span><span class="x" style="left:40.8px;top:1.6px;font-size:9.6px;line-height:12px;color:#f4f4f4;font-weight:bold;letter-spacing:-0.38px;">Pencil</span><svg class="a" style="left:82.2px;top:2.4px;" width="10" height="10" viewBox="0 0 11 11"><circle cx="5.5" cy="5.5" r="2.7" fill="none" stroke="#fff" stroke-width="2.2"/><path d="M5.5 .5v10M.5 5.5h10M2 2l7 7M9 2l-7 7" stroke="#fff" stroke-width="1.5"/><circle cx="5.5" cy="5.5" r="1.3" fill="#4f9fe0"/></svg><div class="a" style="left:0px;top:29.549999999999997px;width:95.5px;height:1px;background:#6a6a6a"></div><div class="a" style="left:2.4px;top:17.15px;width:10.3px;height:10.3px;background:#ff9cf4"></div><span class="x" style="left:16.7px;top:16.5px;font-size:9.4px;line-height:12px;color:#e0788c;letter-spacing:-0.22px;">200</span><span class="x" style="left:40.8px;top:16.5px;font-size:9.6px;line-height:12px;color:#f4f4f4;letter-spacing:-0.76px;">Blur</span><div class="a" style="left:0px;top:44.5px;width:95.5px;height:1px;background:#6a6a6a"></div><div class="a" style="left:2.4px;top:32.1px;width:10.3px;height:10.3px;background:#62dcff"></div><span class="x" style="left:16.7px;top:31.5px;font-size:9.4px;line-height:12px;color:#f0f0f0;letter-spacing:-0.22px;">100</span><span class="x" style="left:40.8px;top:31.5px;font-size:9.6px;line-height:12px;color:#f4f4f4;letter-spacing:-0.16px;">Watercolor (W</span><div class="a" style="left:0px;top:59.449999999999996px;width:95.5px;height:1px;background:#6a6a6a"></div><div class="a" style="left:2.4px;top:47.05px;width:10.3px;height:10.3px;background:#d4d4d4"></div><span class="x" style="left:16.7px;top:46.4px;font-size:9.4px;line-height:12px;color:#f0f0f0;letter-spacing:-0.22px;">100</span><span class="x" style="left:40.8px;top:46.4px;font-size:9.6px;line-height:12px;color:#f4f4f4;letter-spacing:-0.48px;">Airbrush</span><div class="a" style="left:0px;top:74.39999999999999px;width:95.5px;height:1px;background:#6a6a6a"></div><div class="a" style="left:2.4px;top:62px;width:10.3px;height:10.3px;background:#2e2e2e"></div><span class="x" style="left:16.7px;top:61.4px;font-size:9.4px;line-height:12px;color:#f0f0f0;letter-spacing:-0.29px;">10</span><span class="x" style="left:40.8px;top:61.4px;font-size:9.6px;line-height:12px;color:#f4f4f4;letter-spacing:-1.03px;">Pen</span><div class="a" style="left:0px;top:89.35px;width:95.5px;height:1px;background:#6a6a6a"></div><div class="a" style="left:2.4px;top:76.95px;width:10.3px;height:10.3px;background:#3c50ff"></div><span class="x" style="left:16.7px;top:76.3px;font-size:9.4px;line-height:12px;color:#f0f0f0;letter-spacing:-0.22px;">100</span><span class="x" style="left:40.8px;top:76.3px;font-size:9.6px;line-height:12px;color:#f4f4f4;letter-spacing:-0.54px;">Sparkle Brush</span><div class="a" style="left:0px;top:104.29999999999998px;width:95.5px;height:1px;background:#6a6a6a"></div><div class="a" style="left:2.4px;top:91.89999999999999px;width:10.3px;height:10.3px;background:#ff3030"></div><span class="x" style="left:16.7px;top:91.3px;font-size:9.4px;line-height:12px;color:#f0f0f0;letter-spacing:-0.22px;">282</span><span class="x" style="left:40.8px;top:91.3px;font-size:9.6px;line-height:12px;color:#f4f4f4;letter-spacing:-0.34px;">Rotation Symmetry</span><div class="a" style="left:0px;top:119.24999999999999px;width:95.5px;height:1px;background:#6a6a6a"></div><div class="a" style="left:2.4px;top:106.85px;width:10.3px;height:10.3px;background:#2e2e2e"></div><span class="x" style="left:16.7px;top:106.2px;font-size:9.4px;line-height:12px;color:#f0f0f0;letter-spacing:-0.29px;">10</span><span class="x" style="left:40.8px;top:106.2px;font-size:9.6px;line-height:12px;color:#f4f4f4;letter-spacing:-0.26px;">Pen (Sharp)</span><div class="a" style="left:0px;top:134.2px;width:95.5px;height:1px;background:#6a6a6a"></div><div class="a" style="left:2.4px;top:121.8px;width:10.3px;height:10.3px;background:#ff3030"></div><span class="x" style="left:16.7px;top:121.2px;font-size:9.4px;line-height:12px;color:#f0f0f0;letter-spacing:-0.29px;">15</span><span class="x" style="left:40.8px;top:121.2px;font-size:9.6px;line-height:12px;color:#f4f4f4;letter-spacing:-0.62px;">Mapping Pen</span></div><div class="a" style="left:124.5px;top:381.3px;width:13.5px;height:125px;background:#2e2e2e"></div><svg class="a" style="left:127.7px;top:382.8px;" width="7" height="6" viewBox="0 0 7 6"><path d="M3.5 .5L6.5 5.5H.5z" fill="#b8b8b8"/></svg><div class="a" style="left:125.2px;top:394.7px;width:12.2px;height:47px;background:#5c5c5c;border-radius:3px"></div><svg class="a" style="left:127.7px;top:498.8px;" width="7" height="6" viewBox="0 0 7 6"><path d="M3.5 5.5L6.5 .5H.5z" fill="#b8b8b8"/></svg><div class="a" style="left:31.3px;top:509px;width:16.7px;height:17px;background:#444;border:1px solid #565656;border-radius:2px"></div><div class="a" style="left:51.4px;top:509px;width:16.3px;height:17px;background:#444;border:1px solid #565656;border-radius:2px"></div><div class="a" style="left:71.2px;top:509px;width:22.6px;height:17px;background:#444;border:1px solid #565656;border-radius:2px"></div><div class="a" style="left:96.9px;top:509px;width:17.1px;height:17px;background:#444;border:1px solid #565656;border-radius:2px"></div><svg class="a" style="left:31.3px;top:509px;" width="17" height="17" viewBox="0 0 17 17"><path d="M4.8 9.5h7.6a2.1 2.1 0 0 0 .2-4.2 3 3 0 0 0-5.6-.6 1.9 1.9 0 0 0-2.2 1.7 1.7 1.7 0 0 0 0 3.1z" fill="#f4f4f4"/><path d="M8.5 14.5V8.5M6.3 10.5L8.5 8l2.2 2.5" fill="none" stroke="#3e3e3e" stroke-width="2.6"/><path d="M8.5 14.8V9M6.3 10.8L8.5 8.3l2.2 2.5" fill="none" stroke="#f4f4f4" stroke-width="1.5"/></svg><svg class="a" style="left:51.4px;top:509px;" width="17" height="17" viewBox="0 0 17 17"><path d="M4.5 3.5h5l2.5 2.5v7.5H4.5z" fill="none" stroke="#f0f0f0" stroke-width="1.2"/><path d="M9.5 3.5V6H12" fill="none" stroke="#f0f0f0" stroke-width=".9"/></svg><svg class="a" style="left:71.2px;top:509px;" width="23" height="17" viewBox="0 0 23 17"><path d="M4.5 3.5h5l2.5 2.5v7.5H4.5z" fill="none" stroke="#f0f0f0" stroke-width="1.2"/><rect x="6" y="7.5" width="2.3" height="2.3" fill="#f0f0f0"/><rect x="8.3" y="9.8" width="2.3" height="2.3" fill="#f0f0f0"/><path d="M14.8 7.5h5l-2.5 3z" fill="#f0f0f0"/></svg><svg class="a" style="left:96.9px;top:509px;" width="17" height="17" viewBox="0 0 17 17"><path d="M4.5 3.5h5l2.5 2.5v7.5H4.5z" fill="none" stroke="#f0f0f0" stroke-width="1.2"/><path d="M10 8.2H7.3v1.9H9.8V12H6.8" fill="none" stroke="#f0f0f0" stroke-width=".9"/></svg><div class="a" style="left:130px;top:509.5px;width:6px;height:16.5px;background:#4c4c4c;border-radius:3px"></div><div class="a" style="left:824px;top:56px;width:200px;height:107px;background:#2b2b2b"></div><div class="a" style="left:824px;top:56.4px;width:200px;height:1px;background:#4c7aa2"></div><div class="a" style="left:824px;top:57.4px;width:200px;height:15px;background:linear-gradient(#404040,#363636)"></div><span class="x" style="left:894.4px;top:59.4px;font-size:9.2px;line-height:12px;color:#dedede;letter-spacing:-0.56px;">Navigator</span><svg class="a" style="left:1001.0999999999999px;top:59.4px;" width="7.5" height="8.4" viewBox="0 0 8 9"><path d="M4 2H1v6h6V5" fill="none" stroke="#d8d8d8" stroke-width="1"/><path d="M4 5l3.3-3.6M5 1h2.5v2.5" fill="none" stroke="#d8d8d8" stroke-width="1"/></svg><svg class="a" style="left:1013.5px;top:60.6px;" width="6.4" height="6.4" viewBox="0 0 7 7"><path d="M1 1l5 5M6 1l-5 5" stroke="#f4f4f4" stroke-width="1.9"/></svg><div class="a" style="left:826.3px;top:74.8px;width:17.4px;height:17.2px;background:#464646;border:1px solid #565656;border-radius:2px"></div><svg class="a" style="left:827.1999999999999px;top:75.6px;" width="15.6" height="15.6" viewBox="0 0 16 16"><circle cx="7" cy="7" r="3.3" fill="none" stroke="#f0f0f0" stroke-width="1.2"/><path d="M9.5 9.5l2.8 2.8" stroke="#f0f0f0" stroke-width="1.6"/><path d="M7 5.3v3.4" stroke="#f0f0f0" stroke-width="1"/></svg><div class="a" style="left:852px;top:74.8px;width:17.4px;height:17.2px;background:#464646;border:1px solid #565656;border-radius:2px"></div><svg class="a" style="left:852.9px;top:75.6px;" width="15.6" height="15.6" viewBox="0 0 16 16"><circle cx="7" cy="7" r="3.3" fill="none" stroke="#f0f0f0" stroke-width="1.2"/><path d="M9.5 9.5l2.8 2.8" stroke="#f0f0f0" stroke-width="1.6"/><path d="M5.3 7h3.4M7 5.3v3.4" stroke="#f0f0f0" stroke-width="1"/></svg><div class="a" style="left:872.3px;top:74.8px;width:17.4px;height:17.2px;background:#464646;border:1px solid #565656;border-radius:2px"></div><svg class="a" style="left:873.1999999999999px;top:75.6px;" width="15.6" height="15.6" viewBox="0 0 16 16"><rect x="3.5" y="3.5" width="9" height="9" fill="none" stroke="#f0f0f0" stroke-width="1.1"/><path d="M5 7V5h2M9 5h2v2M11 9v2H9M7 11H5V9" fill="none" stroke="#f0f0f0" stroke-width="1"/></svg><div class="a" style="left:892.6px;top:74.8px;width:17.4px;height:17.2px;background:#464646;border:1px solid #565656;border-radius:2px"></div><svg class="a" style="left:893.5px;top:75.6px;" width="15.6" height="15.6" viewBox="0 0 16 16"><circle cx="7" cy="7" r="3.3" fill="none" stroke="#f0f0f0" stroke-width="1.2"/><path d="M9.5 9.5l2.8 2.8" stroke="#f0f0f0" stroke-width="1.6"/><path d="M5.3 7h3.4" stroke="#f0f0f0" stroke-width="1"/></svg><div class="a" style="left:918px;top:74.8px;width:17.4px;height:17.2px;background:#464646;border:1px solid #565656;border-radius:2px"></div><svg class="a" style="left:918.9px;top:75.6px;" width="15.6" height="15.6" viewBox="0 0 16 16"><path d="M4.6 4.6A4.8 4.8 0 1 1 3.2 8" fill="none" stroke="#f0f0f0" stroke-width="1.3"/><path d="M2.2 3.2l4 .2-2.4 3.2z" fill="#f0f0f0"/><path d="M5.8 8.5l2-2.3 2.8.6.2 2.6-2.4 1.4z" fill="#f0f0f0"/></svg><div class="a" style="left:938.8px;top:74.8px;width:17.4px;height:17.2px;background:#1c1c1c;border:1px solid #5a5a5a;border-radius:2px"></div><svg class="a" style="left:939.6999999999999px;top:75.6px;" width="15.6" height="15.6" viewBox="0 0 16 16"><rect x="4.5" y="5" width="7" height="6" fill="#f0f0f0"/><path d="M3 5V3.5h2M11 3.5h2V5M13 11v1.5h-2M5 12.5H3V11" fill="none" stroke="#f0f0f0" stroke-width="1.1"/></svg><div class="a" style="left:958.8px;top:74.8px;width:17.4px;height:17.2px;background:#464646;border:1px solid #565656;border-radius:2px"></div><svg class="a" style="left:959.6999999999999px;top:75.6px;" width="15.6" height="15.6" viewBox="0 0 16 16"><path d="M11.4 4.6A4.8 4.8 0 1 0 12.8 8" fill="none" stroke="#f0f0f0" stroke-width="1.3"/><path d="M13.8 3.2l-4 .2 2.4 3.2z" fill="#f0f0f0"/><path d="M10.2 8.5l-2-2.3-2.8.6-.2 2.6 2.4 1.4z" fill="#f0f0f0"/></svg><div class="a" style="left:983.9px;top:74.8px;width:17.4px;height:17.2px;background:#464646;border:1px solid #565656;border-radius:2px"></div><svg class="a" style="left:984.8px;top:75.6px;" width="15.6" height="15.6" viewBox="0 0 16 16"><rect x="3" y="7" width="4" height="6" fill="#f0f0f0"/><rect x="9.5" y="7" width="3.5" height="6" fill="none" stroke="#f0f0f0" stroke-width="1"/><path d="M5 6c.5-3 5.5-3.5 6.5 0" fill="none" stroke="#f0f0f0" stroke-width="1"/></svg><div class="a" style="left:847.7px;top:79.5px;width:1px;height:8px;background:#666"></div><div class="a" style="left:913.7px;top:79.5px;width:1px;height:8px;background:#666"></div><div class="a" style="left:979.8px;top:79.5px;width:1px;height:8px;background:#666"></div><div class="a" style="left:824px;top:93.4px;width:200px;height:67.6px;background:#4a4a4a"></div><div class="a" style="left:881px;top:95px;width:85px;height:64.4px;background:#fff"></div><svg class="a" style="left:881px;top:95px;" width="85" height="64.4" viewBox="0 0 85 64.4"><g fill="none" stroke="#c07860" stroke-width=".8"><ellipse cx="34.3" cy="29.7" rx="12.8" ry="11.4"/><ellipse cx="28.6" cy="43.5" rx="2.3" ry="2.6"/><path d="M30.3 46c-1.5 6 9 7.5 10.5 1.5M36.5 41c1 4 5 4 5-1v-2"/></g><ellipse cx="36.5" cy="16" rx=".9" ry="1.5" fill="#8a3"/><ellipse cx="38.3" cy="17.3" rx="1.5" ry=".8" fill="#8a3"/><rect x="26.8" y="37.8" width="2.4" height="2.8" fill="#d22"/><circle cx="25.5" cy="36.5" r=".8" fill="#a33"/><circle cx="31" cy="37" r=".8" fill="#a33"/><path d="M22.5 27.5l1.5 1M41.5 21l1.5 1" stroke="#e44" stroke-width=".8"/><path d="M68 11.5h6" stroke="#d8a0a0" stroke-width=".6"/></svg><div class="a" style="left:887.6px;top:103.4px;width:70.4px;height:47.2px;border:1.7px solid #e01818"></div><div class="a" style="left:824px;top:163px;width:200px;height:217px;background:#2b2b2b"></div><div class="a" style="left:824px;top:163px;width:200px;height:1px;background:#4c7aa2"></div><div class="a" style="left:824px;top:164px;width:200px;height:15px;background:linear-gradient(#404040,#363636)"></div><span class="x" style="left:901.4px;top:166px;font-size:9.2px;line-height:12px;color:#dedede;letter-spacing:-0.49px;">Layer</span><svg class="a" style="left:1001.0999999999999px;top:166px;" width="7.5" height="8.4" viewBox="0 0 8 9"><path d="M4 2H1v6h6V5" fill="none" stroke="#d8d8d8" stroke-width="1"/><path d="M4 5l3.3-3.6M5 1h2.5v2.5" fill="none" stroke="#d8d8d8" stroke-width="1"/></svg><svg class="a" style="left:1013.5px;top:167.2px;" width="6.4" height="6.4" viewBox="0 0 7 7"><path d="M1 1l5 5M6 1l-5 5" stroke="#f4f4f4" stroke-width="1.9"/></svg><span class="x" style="left:827.8px;top:184.6px;font-size:9px;line-height:12px;color:#e0e0e0;letter-spacing:-0.42px;">Opacity</span><div class="a" style="left:878px;top:184.7px;width:113px;height:10.5px;background:linear-gradient(90deg,#6eb8f0,#4c92d4);border:1px solid #3a74ac"></div><span class="x" style="left:996px;top:184.6px;font-size:8.8px;line-height:12px;color:#e0e0e0;letter-spacing:-0.48px;">100 %</span><span class="x" style="left:827.8px;top:203.2px;font-size:9px;line-height:12px;color:#e0e0e0;letter-spacing:-0.6px;">Blending</span><div class="a" style="left:879px;top:201px;width:140.4px;height:15.7px;background:#4a4a4a;border-radius:2px"></div><span class="x" style="left:881.6px;top:203.2px;font-size:9px;line-height:12px;color:#e0e0e0;letter-spacing:-0.84px;">Normal</span><svg class="a" style="left:1009px;top:206.5px;" width="7" height="5" viewBox="0 0 7 5"><path d="M.5.5h6l-3 3.5z" fill="#c8c8c8"/></svg><div class="a" style="left:830.6px;top:225px;width:7.6px;height:7.6px;border:1px solid #e0e0e0;border-radius:1px"></div><span class="x" style="left:842.4px;top:222.8px;font-size:9px;line-height:12px;color:#e0e0e0;letter-spacing:-0.4px;">Protect Alpha</span><div class="a" style="left:900.7px;top:225px;width:7.6px;height:7.6px;border:1px solid #555;border-radius:1px"></div><span class="x" style="left:912.8px;top:222.8px;font-size:9px;line-height:12px;color:#7c7c7c;letter-spacing:-0.63px;">Clipping</span><div class="a" style="left:963.9px;top:225px;width:7.6px;height:7.6px;border:1px solid #e0e0e0;border-radius:1px"></div><span class="x" style="left:976px;top:222.8px;font-size:9px;line-height:12px;color:#e0e0e0;letter-spacing:-0.86px;">Lock</span><div class="a" style="left:825.6px;top:238.8px;width:181.4px;height:113.2px;background:#484848"></div><div class="a" style="left:825.6px;top:238.8px;width:181.4px;height:29.6px;background:#5a5a5a"></div><div class="a" style="left:825.6px;top:268.4px;width:14.6px;height:29.2px;background:#5e5e5e"></div><div class="a" style="left:840.2px;top:268.4px;width:166.8px;height:29.2px;background:#4f9fe0"></div><div class="a" style="left:829.3px;top:250px;width:7px;height:7px;background:#cdcdcd;border-radius:50%"></div><div class="a" style="left:829.3px;top:280px;width:7px;height:7px;background:#cdcdcd;border-radius:50%"></div><div class="a" style="left:851px;top:247.5px;width:26.5px;height:12.5px;background:#fff"></div><span class="x" style="left:852px;top:247.7px;font-size:5px;line-height:5.6px;color:#333;letter-spacing:-.2px;font-weight:bold">Heokon<br>#Hoidap247</span><svg class="a" style="left:851px;top:273.8px;overflow:hidden" width="26.5" height="19.6" viewBox="0 0 26.5 19.6"><rect width="26.5" height="19.6" fill="#fff"/><rect x="1" y="3.2" width="2.45" height="2.2" fill="#dcdcdc"/><rect x="1" y="7.6" width="2.45" height="2.2" fill="#dcdcdc"/><rect x="1" y="12" width="2.45" height="2.2" fill="#dcdcdc"/><rect x="1" y="16.4" width="2.45" height="2.2" fill="#dcdcdc"/><rect x="3.45" y="1" width="2.45" height="2.2" fill="#dcdcdc"/><rect x="3.45" y="5.4" width="2.45" height="2.2" fill="#dcdcdc"/><rect x="3.45" y="9.8" width="2.45" height="2.2" fill="#dcdcdc"/><rect x="3.45" y="14.2" width="2.45" height="2.2" fill="#dcdcdc"/><rect x="5.9" y="3.2" width="2.45" height="2.2" fill="#dcdcdc"/><rect x="5.9" y="7.6" width="2.45" height="2.2" fill="#dcdcdc"/><rect x="5.9" y="12" width="2.45" height="2.2" fill="#dcdcdc"/><rect x="5.9" y="16.4" width="2.45" height="2.2" fill="#dcdcdc"/><rect x="8.35" y="1" width="2.45" height="2.2" fill="#dcdcdc"/><rect x="8.35" y="5.4" width="2.45" height="2.2" fill="#dcdcdc"/><rect x="8.35" y="9.8" width="2.45" height="2.2" fill="#dcdcdc"/><rect x="8.35" y="14.2" width="2.45" height="2.2" fill="#dcdcdc"/><rect x="10.8" y="3.2" width="2.45" height="2.2" fill="#dcdcdc"/><rect x="10.8" y="7.6" width="2.45" height="2.2" fill="#dcdcdc"/><rect x="10.8" y="12" width="2.45" height="2.2" fill="#dcdcdc"/><rect x="10.8" y="16.4" width="2.45" height="2.2" fill="#dcdcdc"/><rect x="13.25" y="1" width="2.45" height="2.2" fill="#dcdcdc"/><rect x="13.25" y="5.4" width="2.45" height="2.2" fill="#dcdcdc"/><rect x="13.25" y="9.8" width="2.45" height="2.2" fill="#dcdcdc"/><rect x="13.25" y="14.2" width="2.45" height="2.2" fill="#dcdcdc"/><rect x="15.7" y="3.2" width="2.45" height="2.2" fill="#dcdcdc"/><rect x="15.7" y="7.6" width="2.45" height="2.2" fill="#dcdcdc"/><rect x="15.7" y="12" width="2.45" height="2.2" fill="#dcdcdc"/><rect x="15.7" y="16.4" width="2.45" height="2.2" fill="#dcdcdc"/><rect x="18.15" y="1" width="2.45" height="2.2" fill="#dcdcdc"/><rect x="18.15" y="5.4" width="2.45" height="2.2" fill="#dcdcdc"/><rect x="18.15" y="9.8" width="2.45" height="2.2" fill="#dcdcdc"/><rect x="18.15" y="14.2" width="2.45" height="2.2" fill="#dcdcdc"/><rect x="20.6" y="3.2" width="2.45" height="2.2" fill="#dcdcdc"/><rect x="20.6" y="7.6" width="2.45" height="2.2" fill="#dcdcdc"/><rect x="20.6" y="12" width="2.45" height="2.2" fill="#dcdcdc"/><rect x="20.6" y="16.4" width="2.45" height="2.2" fill="#dcdcdc"/><rect x="23.05" y="1" width="2.45" height="2.2" fill="#dcdcdc"/><rect x="23.05" y="5.4" width="2.45" height="2.2" fill="#dcdcdc"/><rect x="23.05" y="9.8" width="2.45" height="2.2" fill="#dcdcdc"/><rect x="23.05" y="14.2" width="2.45" height="2.2" fill="#dcdcdc"/><ellipse cx="10.8" cy="8.5" rx="3.8" ry="3.6" fill="none" stroke="#d08868" stroke-width=".6"/><path d="M9 13c0 2 3 2 3.5.5" fill="none" stroke="#d08868" stroke-width=".6"/><rect x=".5" y=".5" width="25.5" height="18.6" fill="none" stroke="#fff" stroke-width="1"/></svg><span class="x" style="left:890px;top:247.7px;font-size:9.4px;line-height:12px;color:#f0f0f0;letter-spacing:-0.19px;">Heokon</span><span class="x" style="left:890px;top:278px;font-size:9.4px;line-height:12px;color:#ffffff;font-weight:bold;letter-spacing:0.58px;">Layer1</span><svg class="a" style="left:991.3px;top:278px;" width="13" height="13" viewBox="0 0 13 13"><circle cx="6.5" cy="6.5" r="3.2" fill="none" stroke="#fff" stroke-width="2.6"/><path d="M6.5 .3v12.4M.3 6.5h12.4M2.1 2.1l8.8 8.8M10.9 2.1l-8.8 8.8" stroke="#fff" stroke-width="1.9"/><circle cx="6.5" cy="6.5" r="1.7" fill="#4f9fe0"/></svg><div class="a" style="left:1007.5px;top:238.8px;width:15.5px;height:113.2px;background:#2e2e2e"></div><svg class="a" style="left:1011.5px;top:240px;" width="7" height="6" viewBox="0 0 7 6"><path d="M3.5 .5L6.5 5.5H.5z" fill="#b8b8b8"/></svg><div class="a" style="left:1008.4px;top:247.5px;width:13.6px;height:95px;background:#5c5c5c;border-radius:3px"></div><svg class="a" style="left:1011.5px;top:344.5px;" width="7" height="6" viewBox="0 0 7 6"><path d="M3.5 5.5L6.5 .5H.5z" fill="#b8b8b8"/></svg><div class="a" style="left:825.6px;top:353px;width:181.4px;height:22px;background:#232323;border:1px solid #383838"></div><div class="a" style="left:828.8px;top:355px;width:16.5px;height:17.5px;background:#464646;border:1px solid #565656;border-radius:2px"></div><svg class="a" style="left:828.8px;top:355.5px;" width="22" height="17" viewBox="0 0 22 17"><path d="M4.5 3.5h5l2.5 2.5v7.5H4.5z" fill="none" stroke="#f0f0f0" stroke-width="1.2"/><path d="M9.5 3.5V6H12" fill="none" stroke="#f0f0f0" stroke-width=".9"/></svg><div class="a" style="left:849px;top:355px;width:16.5px;height:17.5px;background:#464646;border:1px solid #565656;border-radius:2px"></div><svg class="a" style="left:849px;top:355.5px;" width="22" height="17" viewBox="0 0 22 17"><path d="M4.5 3.5h5l2.5 2.5v7.5H4.5z" fill="none" stroke="#f0f0f0" stroke-width="1.2"/><text x="8.2" y="12" font-size="6" font-family="Liberation Sans,sans-serif" font-weight="bold" fill="#f0f0f0" text-anchor="middle">8</text></svg><div class="a" style="left:869.4px;top:355px;width:16.5px;height:17.5px;background:#464646;border:1px solid #565656;border-radius:2px"></div><svg class="a" style="left:869.4px;top:355.5px;" width="22" height="17" viewBox="0 0 22 17"><path d="M4.5 3.5h5l2.5 2.5v7.5H4.5z" fill="none" stroke="#f0f0f0" stroke-width="1.2"/><text x="8.2" y="12" font-size="6" font-family="Liberation Sans,sans-serif" font-weight="bold" fill="#f0f0f0" text-anchor="middle">1</text></svg><div class="a" style="left:889.7px;top:355px;width:21.3px;height:17.5px;background:#464646;border:1px solid #565656;border-radius:2px"></div><svg class="a" style="left:889.7px;top:355.5px;" width="22" height="17" viewBox="0 0 22 17"><path d="M3.5 3.5h4.5l2.5 2.5v7.5H4.5z" fill="none" stroke="#f0f0f0" stroke-width="1.2"/><path d="M8.5 11.8h4.6M10.8 9.5v4.6" stroke="#464646" stroke-width="3"/><path d="M8.5 11.8h4.6M10.8 9.5v4.6" stroke="#f0f0f0" stroke-width="1.3"/><path d="M14.5 7.5h5l-2.5 3z" fill="#f0f0f0"/></svg><div class="a" style="left:914.7px;top:355px;width:16.5px;height:17.5px;background:#464646;border:1px solid #565656;border-radius:2px"></div><svg class="a" style="left:914.7px;top:355.5px;" width="22" height="17" viewBox="0 0 22 17"><path d="M3 5h4l1 1.3h5.5V13H3z" fill="#f0f0f0"/></svg><div class="a" style="left:940px;top:355px;width:16.5px;height:17.5px;background:#464646;border:1px solid #565656;border-radius:2px"></div><svg class="a" style="left:940px;top:355.5px;" width="22" height="17" viewBox="0 0 22 17"><rect x="6" y="3.5" width="7" height="7" fill="none" stroke="#f0f0f0" stroke-width="1.1"/><rect x="3.5" y="6" width="7" height="7" fill="#3e3e3e" stroke="#f0f0f0" stroke-width="1.1"/></svg><div class="a" style="left:960px;top:355px;width:17.5px;height:17.5px;background:#1c1c1c;border:1px solid #5a5a5a;border-radius:2px"></div><svg class="a" style="left:960px;top:355.5px;" width="22" height="17" viewBox="0 0 22 17"><rect x="3.5" y="3" width="3.5" height="3.5" fill="none" stroke="#f0f0f0" stroke-width="1"/><rect x="3.5" y="10.5" width="3.5" height="3.5" fill="none" stroke="#f0f0f0" stroke-width="1"/><path d="M5.2 6.5v4M7 8.5h2.5" stroke="#f0f0f0" stroke-width="1"/><rect x="9.5" y="6.2" width="5" height="4.6" fill="#f0f0f0"/></svg><div class="a" style="left:986px;top:355px;width:16.5px;height:17.5px;background:#464646;border:1px solid #565656;border-radius:2px"></div><svg class="a" style="left:986px;top:355.5px;" width="22" height="17" viewBox="0 0 22 17"><path d="M4 5.5h9M6.5 5.5V4h4v1.5M5 6v7.5h7V6" fill="none" stroke="#f0f0f0" stroke-width="1.2"/><path d="M7 7.5v4.5M8.5 7.5v4.5M10 7.5v4.5" stroke="#f0f0f0" stroke-width=".9"/></svg><div class="a" style="left:936px;top:360px;width:1px;height:8px;background:#666"></div><div class="a" style="left:981.3px;top:360px;width:1px;height:8px;background:#666"></div><div class="a" style="left:824px;top:380px;width:200px;height:151px;background:#2b2b2b"></div><div class="a" style="left:824px;top:380px;width:200px;height:1px;background:#4c7aa2"></div><div class="a" style="left:824px;top:381px;width:200px;height:15px;background:linear-gradient(#404040,#363636)"></div><span class="x" style="left:894px;top:383px;font-size:9.2px;line-height:12px;color:#dedede;letter-spacing:-0.8px;">Brush Size</span><svg class="a" style="left:1001.0999999999999px;top:383px;" width="7.5" height="8.4" viewBox="0 0 8 9"><path d="M4 2H1v6h6V5" fill="none" stroke="#d8d8d8" stroke-width="1"/><path d="M4 5l3.3-3.6M5 1h2.5v2.5" fill="none" stroke="#d8d8d8" stroke-width="1"/></svg><svg class="a" style="left:1013.5px;top:384.2px;" width="6.4" height="6.4" viewBox="0 0 7 7"><path d="M1 1l5 5M6 1l-5 5" stroke="#f4f4f4" stroke-width="1.9"/></svg><div class="a" style="left:824px;top:396px;width:180px;height:135px;overflow:hidden;background:#424242"><div class="a" style="left:0.5px;top:0.5px;width:29.2px;height:36.7px;background:#505050"></div><svg class="a" style="left:0px;top:0px;opacity:.45" width="30" height="31" viewBox="0 0 30 31"><circle cx="15" cy="15.5" r="0.3" fill="#f0f0f0"/></svg><span class="x" style="left:13.7px;top:28.2px;font-size:7.6px;line-height:10px;color:#f4f4f4;letter-spacing:0px;">1</span><div class="a" style="left:30.5px;top:0.5px;width:29.2px;height:36.7px;background:#505050"></div><svg class="a" style="left:30px;top:0px;opacity:.45" width="30" height="31" viewBox="0 0 30 31"><circle cx="15" cy="15.5" r="0.45" fill="#f0f0f0"/></svg><span class="x" style="left:40.5px;top:28.2px;font-size:7.6px;line-height:10px;color:#f4f4f4;letter-spacing:-0.59px;">1.5</span><div class="a" style="left:60.5px;top:0.5px;width:29.2px;height:36.7px;background:#505050"></div><svg class="a" style="left:60px;top:0px;" width="30" height="31" viewBox="0 0 30 31"><circle cx="15" cy="15.5" r="0.65" fill="#f0f0f0"/></svg><span class="x" style="left:73.7px;top:28.2px;font-size:7.6px;line-height:10px;color:#f4f4f4;letter-spacing:0px;">2</span><div class="a" style="left:90.5px;top:0.5px;width:29.2px;height:36.7px;background:#505050"></div><svg class="a" style="left:90px;top:0px;" width="30" height="31" viewBox="0 0 30 31"><circle cx="15" cy="15.5" r="0.95" fill="#f0f0f0"/></svg><span class="x" style="left:103.7px;top:28.2px;font-size:7.6px;line-height:10px;color:#f4f4f4;letter-spacing:0px;">3</span><div class="a" style="left:120.5px;top:0.5px;width:29.2px;height:36.7px;background:#505050"></div><svg class="a" style="left:120px;top:0px;" width="30" height="31" viewBox="0 0 30 31"><circle cx="15" cy="15.5" r="1.4" fill="#f0f0f0"/></svg><span class="x" style="left:133.7px;top:28.2px;font-size:7.6px;line-height:10px;color:#f4f4f4;letter-spacing:0px;">4</span><div class="a" style="left:150.5px;top:0.5px;width:29.2px;height:36.7px;background:#505050"></div><svg class="a" style="left:150px;top:0px;" width="30" height="31" viewBox="0 0 30 31"><circle cx="15" cy="15.5" r="1.8" fill="#f0f0f0"/></svg><span class="x" style="left:163.7px;top:28.2px;font-size:7.6px;line-height:10px;color:#f4f4f4;letter-spacing:0px;">5</span><div class="a" style="left:0.5px;top:38px;width:29.2px;height:36.7px;background:#505050"></div><svg class="a" style="left:0px;top:37.5px;" width="30" height="31" viewBox="0 0 30 31"><circle cx="15" cy="15.5" r="3" fill="#f0f0f0"/></svg><span class="x" style="left:13.7px;top:65.7px;font-size:7.6px;line-height:10px;color:#f4f4f4;letter-spacing:0px;">7</span><div class="a" style="left:30.5px;top:38px;width:29.2px;height:36.7px;background:#505050"></div><svg class="a" style="left:30px;top:37.5px;" width="30" height="31" viewBox="0 0 30 31"><circle cx="15" cy="15.5" r="4" fill="#f0f0f0"/></svg><span class="x" style="left:41.2px;top:65.7px;font-size:7.6px;line-height:10px;color:#f4f4f4;letter-spacing:-0.57px;">10</span><div class="a" style="left:60.5px;top:38px;width:29.2px;height:36.7px;background:#505050"></div><svg class="a" style="left:60px;top:37.5px;" width="30" height="31" viewBox="0 0 30 31"><circle cx="15" cy="15.5" r="4.9" fill="#f0f0f0"/></svg><span class="x" style="left:71.2px;top:65.7px;font-size:7.6px;line-height:10px;color:#f4f4f4;letter-spacing:-0.57px;">12</span><div class="a" style="left:90.5px;top:38px;width:29.2px;height:36.7px;background:#505050"></div><svg class="a" style="left:90px;top:37.5px;" width="30" height="31" viewBox="0 0 30 31"><circle cx="15" cy="15.5" r="5.9" fill="#f0f0f0"/></svg><span class="x" style="left:101.2px;top:65.7px;font-size:7.6px;line-height:10px;color:#f4f4f4;letter-spacing:-0.57px;">15</span><div class="a" style="left:120.5px;top:38px;width:29.2px;height:36.7px;background:#505050"></div><svg class="a" style="left:120px;top:37.5px;" width="30" height="31" viewBox="0 0 30 31"><circle cx="15" cy="15.5" r="7.8" fill="#f0f0f0"/></svg><span class="x" style="left:131.2px;top:65.7px;font-size:7.6px;line-height:10px;color:#f4f4f4;letter-spacing:-0.57px;">20</span><div class="a" style="left:150.5px;top:38px;width:29.2px;height:36.7px;background:#505050"></div><svg class="a" style="left:150px;top:37.5px;" width="30" height="31" viewBox="0 0 30 31"><circle cx="15" cy="15.5" r="9.15" fill="#f0f0f0"/></svg><span class="x" style="left:161.2px;top:65.7px;font-size:7.6px;line-height:10px;color:#f4f4f4;letter-spacing:-0.57px;">25</span><div class="a" style="left:0.5px;top:75.5px;width:29.2px;height:36.7px;background:#505050"></div><svg class="a" style="left:0px;top:75px;" width="30" height="31" viewBox="0 0 30 31"><circle cx="15" cy="15.5" r="9.15" fill="#f0f0f0"/></svg><span class="x" style="left:11.2px;top:103.2px;font-size:7.6px;line-height:10px;color:#f4f4f4;letter-spacing:-0.57px;">30</span><div class="a" style="left:30.5px;top:75.5px;width:29.2px;height:36.7px;background:#505050"></div><svg class="a" style="left:30px;top:75px;" width="30" height="31" viewBox="0 0 30 31"><circle cx="15" cy="15.5" r="9.15" fill="#f0f0f0"/></svg><span class="x" style="left:41.2px;top:103.2px;font-size:7.6px;line-height:10px;color:#f4f4f4;letter-spacing:-0.57px;">40</span><div class="a" style="left:60.5px;top:75.5px;width:29.2px;height:36.7px;background:#505050"></div><svg class="a" style="left:60px;top:75px;" width="30" height="31" viewBox="0 0 30 31"><circle cx="15" cy="15.5" r="9.15" fill="#f0f0f0"/></svg><span class="x" style="left:71.2px;top:103.2px;font-size:7.6px;line-height:10px;color:#f4f4f4;letter-spacing:-0.57px;">50</span><div class="a" style="left:90.5px;top:75.5px;width:29.2px;height:36.7px;background:#505050"></div><svg class="a" style="left:90px;top:75px;" width="30" height="31" viewBox="0 0 30 31"><circle cx="15" cy="15.5" r="9.15" fill="#f0f0f0"/></svg><span class="x" style="left:101.2px;top:103.2px;font-size:7.6px;line-height:10px;color:#f4f4f4;letter-spacing:-0.57px;">70</span><div class="a" style="left:120.5px;top:75.5px;width:29.2px;height:36.7px;background:#505050"></div><svg class="a" style="left:120px;top:75px;" width="30" height="31" viewBox="0 0 30 31"><circle cx="15" cy="15.5" r="9.15" fill="#f0f0f0"/></svg><span class="x" style="left:128.9px;top:103.2px;font-size:7.6px;line-height:10px;color:#f4f4f4;letter-spacing:-0.19px;">100</span><div class="a" style="left:150.5px;top:75.5px;width:29.2px;height:36.7px;background:#505050"></div><svg class="a" style="left:150px;top:75px;" width="30" height="31" viewBox="0 0 30 31"><circle cx="15" cy="15.5" r="9.15" fill="#f0f0f0"/></svg><span class="x" style="left:158.9px;top:103.2px;font-size:7.6px;line-height:10px;color:#f4f4f4;letter-spacing:-0.19px;">150</span><div class="a" style="left:0.5px;top:113px;width:29.2px;height:36.7px;background:#505050"></div><svg class="a" style="left:0px;top:112.5px;" width="30" height="31" viewBox="0 0 30 31"><circle cx="15" cy="15.5" r="9.15" fill="#f0f0f0"/></svg><span class="x" style="left:8.9px;top:140.7px;font-size:7.6px;line-height:10px;color:#f4f4f4;letter-spacing:-0.19px;">200</span><div class="a" style="left:30.5px;top:113px;width:29.2px;height:36.7px;background:#505050"></div><svg class="a" style="left:30px;top:112.5px;" width="30" height="31" viewBox="0 0 30 31"><circle cx="15" cy="15.5" r="9.15" fill="#f0f0f0"/></svg><span class="x" style="left:38.9px;top:140.7px;font-size:7.6px;line-height:10px;color:#f4f4f4;letter-spacing:-0.19px;">300</span><div class="a" style="left:60.5px;top:113px;width:29.2px;height:36.7px;background:#505050"></div><svg class="a" style="left:60px;top:112.5px;" width="30" height="31" viewBox="0 0 30 31"><circle cx="15" cy="15.5" r="9.15" fill="#f0f0f0"/></svg><span class="x" style="left:68.9px;top:140.7px;font-size:7.6px;line-height:10px;color:#f4f4f4;letter-spacing:-0.19px;">400</span><div class="a" style="left:90.5px;top:113px;width:29.2px;height:36.7px;background:#505050"></div><svg class="a" style="left:90px;top:112.5px;" width="30" height="31" viewBox="0 0 30 31"><circle cx="15" cy="15.5" r="9.15" fill="#f0f0f0"/></svg><span class="x" style="left:98.9px;top:140.7px;font-size:7.6px;line-height:10px;color:#f4f4f4;letter-spacing:-0.19px;">500</span><div class="a" style="left:120.5px;top:113px;width:29.2px;height:36.7px;background:#505050"></div><svg class="a" style="left:120px;top:112.5px;" width="30" height="31" viewBox="0 0 30 31"><circle cx="15" cy="15.5" r="9.15" fill="#f0f0f0"/></svg><span class="x" style="left:128.9px;top:140.7px;font-size:7.6px;line-height:10px;color:#f4f4f4;letter-spacing:-0.19px;">700</span><div class="a" style="left:150.5px;top:113px;width:29.2px;height:36.7px;background:#505050"></div><svg class="a" style="left:150px;top:112.5px;" width="30" height="31" viewBox="0 0 30 31"><circle cx="15" cy="15.5" r="9.15" fill="#f0f0f0"/></svg><span class="x" style="left:156.5px;top:140.7px;font-size:7.6px;line-height:10px;color:#f4f4f4;letter-spacing:0.03px;">1000</span></div><div class="a" style="left:1004px;top:396px;width:5px;height:135px;background:#2b2b2b"></div><div class="a" style="left:1009px;top:396px;width:14.5px;height:135px;background:#2e2e2e"></div><svg class="a" style="left:1012.8px;top:396.8px;" width="7" height="6" viewBox="0 0 7 6"><path d="M3.5 .5L6.5 5.5H.5z" fill="#b8b8b8"/></svg><div class="a" style="left:1009.8px;top:404.8px;width:13px;height:104.5px;background:#5c5c5c;border-radius:3px"></div><svg class="a" style="left:1012.8px;top:523.3px;" width="7" height="6" viewBox="0 0 7 6"><path d="M3.5 5.5L6.5 .5H.5z" fill="#b8b8b8"/></svg><div class="a" style="left:0px;top:531px;width:1024px;height:16px;background:#262626"></div><span class="x" style="left:5px;top:533px;font-size:8.8px;line-height:12px;color:#dcdcdc;letter-spacing:-0.27px;">1600 * 1200 pixel</span><span class="x" style="left:76.5px;top:533px;font-size:8.8px;line-height:12px;color:#dcdcdc;letter-spacing:-0.08px;">(11.6 * 8.7cm)</span><span class="x" style="left:136.8px;top:533px;font-size:8.8px;line-height:12px;color:#dcdcdc;letter-spacing:-0.1px;">350 dpi</span><span class="x" style="left:171.5px;top:533px;font-size:8.8px;line-height:12px;color:#dcdcdc;letter-spacing:-0.36px;">66 %</span><span class="x" style="left:198px;top:533px;font-size:8.8px;line-height:12px;color:#dcdcdc;letter-spacing:-0.36px;">( 433, 1036 )</span><span class="x" style="left:250.5px;top:533px;font-size:8.8px;line-height:12px;color:#dcdcdc;letter-spacing:0.08px;">Draw a straight line by holding down Shift, Change a brush size by holding down Ctrl, Alt, and dragging</span><div class="a" style="left:0;top:547px;width:1024px;height:29px;overflow:hidden"><div class="a" style="left:0;top:0;width:1024px;height:29px;background:linear-gradient(90deg,#0d0d0b 0,#100f0c 33%,#221c12 40%,#262014 48%,#2a2918 56%,#28291a 66%,#1e2718 72%,#1c2616 78%,#263222 83%,#2a3826 87%,#171b16 91%,#0d0e0d 95%,#0a0a0a 100%)"></div><div class="a" style="left:820px;top:14px;width:90px;height:22px;border-radius:50%;background:#3c4c34;filter:blur(6px);opacity:.8"></div><div class="a" style="left:560px;top:-4px;width:70px;height:16px;border-radius:50%;background:#3a2c1a;filter:blur(6px);opacity:.7"></div><div class="a" style="left:640px;top:12px;width:60px;height:20px;border-radius:50%;background:#343a20;filter:blur(6px);opacity:.7"></div><div class="a" style="left:440px;top:10px;width:60px;height:22px;border-radius:50%;background:#1a150e;filter:blur(6px);opacity:.8"></div><div class="a" style="left:0;top:0;width:1024px;height:29px;background:linear-gradient(rgba(0,0,0,.05),rgba(0,0,0,.28))"></div><div class="a" style="left:0;top:0;width:1024px;height:1px;background:#5a5a5a"></div><div class="a" style="left:6px;top:1.5px;width:28px;height:27px;border-radius:50%;background:radial-gradient(circle at 50% 30%,#7ec8f0 0,#2a78b8 45%,#0c3c70 75%,#1a5c98 100%);box-shadow:0 0 2px 1px rgba(90,170,230,.55)"></div><svg class="a" style="left:6px;top:1.5px;" width="28" height="27" viewBox="0 0 28 27"><path d="M7.5 9.5c2-1 4-1 6 .2l-1 4.8c-2-1.2-4-1.2-6-.2z" fill="#f26a3c"/><path d="M14.8 9.9c2 1 4 1 6-.1l-1 4.8c-2 1.1-4 1.1-6 .1z" fill="#8cc83c"/><path d="M6.2 15.4c2-1 4-1 6 .2l-1 4.8c-2-1.2-4-1.2-6-.2z" fill="#3c9ce8"/><path d="M13.5 15.8c2 1 4 1 6-.1l-1 4.8c-2 1.1-4 1.1-6 .1z" fill="#f8c838"/></svg><div class="a" style="left:47.5px;top:3px;width:2px;height:24px;background:repeating-linear-gradient(#444 0 1px,transparent 1px 2.5px);opacity:.7"></div><svg class="a" style="left:67px;top:4px;" width="24" height="22" viewBox="0 0 24 22"><path d="M2 1.5L12 11 2 20.5z" fill="#7038d8"/><path d="M22 1.5L12 11l10 9.5z" fill="#d0b4f8"/><path d="M2 6.5l7 4.5-7 4.5z" fill="#5020b8"/></svg><svg class="a" style="left:110px;top:1px;" width="32" height="28" viewBox="0 0 32 28"><defs><linearGradient id="ieg" x1="0" y1="0" x2="0" y2="1"><stop offset="0" stop-color="#1a6cd0"/><stop offset=".55" stop-color="#2ea4f4"/><stop offset="1" stop-color="#5cc4fa"/></linearGradient></defs><path d="M4.5 22.5C1.5 17.5 9 8 18 4.5c5-2 8.5-1.5 9 .8" fill="none" stroke="#e8a818" stroke-width="1.8"/><text x="8.5" y="21.5" font-family="Liberation Sans,sans-serif" font-weight="bold" font-size="25" fill="url(#ieg)" stroke="url(#ieg)" stroke-width=".9">e</text><path d="M4.5 22.5c2 3 8 2 12.5-1" fill="none" stroke="#f0b828" stroke-width="1.8"/><path d="M27 5.3c.5 1.5-1 4-3 6" fill="none" stroke="#e8a818" stroke-width="1.5"/></svg><svg class="a" style="left:159px;top:1px;" width="28" height="28" viewBox="0 0 28 28"><circle cx="12.8" cy="14.1" r="11.6" fill="#62b854"/><circle cx="12.8" cy="14.1" r="11.6" fill="none" stroke="#d8f0d4" stroke-width="1"/><path d="M12.5 13.5L14 2l10.5.5L24 9.5z" fill="#f4faf2"/><path d="M16.5 10.5L22.5 2.5L19 2.2z" fill="#62b854"/><path d="M14 9.5L13 3.2M20 11.5l4.8-3" stroke="#f0702c" stroke-width="1.9"/><circle cx="11.8" cy="14.5" r="4.3" fill="#62b854" stroke="#f4faf2" stroke-width="1.3"/></svg><div class="a" style="left:196px;top:0.5px;width:44px;height:28px;background:linear-gradient(#5c5a56,#45433f 45%,#2a2926 50%,#45433f);border:1px solid #76746e;border-radius:2px"></div><div class="a" style="left:243px;top:0.5px;width:43.5px;height:28px;background:linear-gradient(#8a8a86,#6a6a66 45%,#4c4c48 50%,#7c7c78);border:1px solid #b4b4b0;border-radius:2px"></div><div class="a" style="left:289px;top:0.5px;width:41px;height:28px;background:linear-gradient(#5c5a56,#45433f 45%,#2a2926 50%,#45433f);border:1px solid #76746e;border-radius:2px"></div><div class="a" style="left:335.5px;top:0.5px;width:44px;height:28px;background:linear-gradient(#5c5a56,#45433f 45%,#2a2926 50%,#45433f);border:1px solid #76746e;border-radius:2px"></div><div class="a" style="left:207px;top:3.5px;width:23px;height:23px;border-radius:50%;background:conic-gradient(from 60deg,#f8c820 0 120deg,#38a858 120deg 240deg,#e84030 240deg 360deg)"></div><div class="a" style="left:213px;top:9.5px;width:11px;height:11px;border-radius:50%;background:#4a8cf4;border:1.6px solid #fff"></div><div class="a" style="left:253px;top:2.5px;width:23.5px;height:24px;border-radius:4.5px;background:#f4f4f2"></div><svg class="a" style="left:253px;top:2.5px;" width="24" height="24" viewBox="0 0 24 24"><defs><linearGradient id="mbg" x1="0" y1="0" x2="1" y2="1"><stop offset="0" stop-color="#f04030"/><stop offset=".3" stop-color="#f07028"/><stop offset=".5" stop-color="#28b4c8"/><stop offset=".8" stop-color="#20a8a0"/><stop offset="1" stop-color="#48c048"/></linearGradient></defs><path d="M14.5 2.5c.5 2.5 3.5 5.5 3.5 10a6.6 6.6 0 0 1-13.2 0c0-4 3-6.5 5.5-7.5 2-.8 3.5-1.5 4.2-2.5z" fill="url(#mbg)"/><path d="M5 14.5c2 3.5 9 5 12.5 0-1 4-4 5-6.5 5s-5.2-1.5-6-5z" fill="#40c050"/><path d="M4.8 12.5c0-4 3-6.5 5.5-7.5 1.5-.6 3-1.3 3.8-2 .2 2-1 3.5-3 5-2.5 1.8-4 2.5-6.3 4.5z" fill="#f04838"/></svg><div class="a" style="left:297px;top:2px;width:25px;height:23px;border-radius:9px;background:#fff;border-left:2.5px solid #2870e8;border-bottom:1px solid #2870e8"></div><svg class="a" style="left:296px;top:20px;" width="12" height="9" viewBox="0 0 12 9"><path d="M3 0c0 3-1 5-3 7.5 4 0 7-1.5 9-4z" fill="#fff"/></svg><span class="x" style="left:301px;top:7px;font-size:9.5px;line-height:12px;font-weight:bold;color:#1868e8;letter-spacing:-.3px">Zalo</span><svg class="a" style="left:344px;top:1px;" width="30" height="28" viewBox="0 0 30 28"><path d="M3.5 16c0-5.5 5-9.5 11-9.5 5 0 8 2.6 8 6 0 2.6-2 3.6-4.3 3.6-2.2 0-2.7 1.4-2 3 .8 2-.6 3.9-3.2 3.9-5 0-9.5-2.5-9.5-7z" fill="#e8e4dc"/><path d="M3.5 16c0-5.5 5-9.5 11-9.5 5 0 8 2.6 8 6 0 2.6-2 3.6-4.3 3.6-2.2 0-2.7 1.4-2 3 .8 2-.6 3.9-3.2 3.9-5 0-9.5-2.5-9.5-7z" fill="none" stroke="#88a8c8" stroke-width=".8"/><circle cx="8" cy="12.5" r="1.7" fill="#e84848"/><circle cx="12.5" cy="9.5" r="1.7" fill="#68b848"/><circle cx="17.5" cy="9.8" r="1.7" fill="#4888e0"/><circle cx="9" cy="18" r="1.6" fill="#505868"/><path d="M23.5 4L16 22" stroke="#e89838" stroke-width="2.6" stroke-linecap="round"/><path d="M24.5 1.5L23 5.5" stroke="#c0c0c8" stroke-width="2.4" stroke-linecap="round"/><path d="M16.5 21l-1 3.5" stroke="#705030" stroke-width="1.8" stroke-linecap="round"/></svg><div class="a" style="left:911px;top:3px;width:2px;height:24px;background:repeating-linear-gradient(#555 0 1px,transparent 1px 2.5px);opacity:.6"></div><svg class="a" style="left:946.2px;top:12.8px;" width="6" height="4" viewBox="0 0 6 4"><path d="M3 .3L5.7 3.7H.3z" fill="#f0f0f0"/></svg><div class="a" style="left:1013.5px;top:1px;width:10.5px;height:28px;background:linear-gradient(#6c6c6c,#3a3a3a 45%,#1e1e1e 52%,#2c2c2c);border:1px solid #787878;border-right:0"></div></div><span class="x" style="left:923px;top:553.8px;font-size:8.6px;line-height:12px;color:#e8e8e8;letter-spacing:-0.5px;">EN</span><span class="x" style="left:966.5px;top:547.5px;font-size:9px;line-height:12px;color:#f4f4f4;letter-spacing:-0.04px;">6:45 AM</span><span class="x" style="left:965.8px;top:562px;font-size:9px;line-height:12px;color:#f4f4f4;letter-spacing:-0.09px;">9/8/2021</span>
</div>
</body>
</html>
